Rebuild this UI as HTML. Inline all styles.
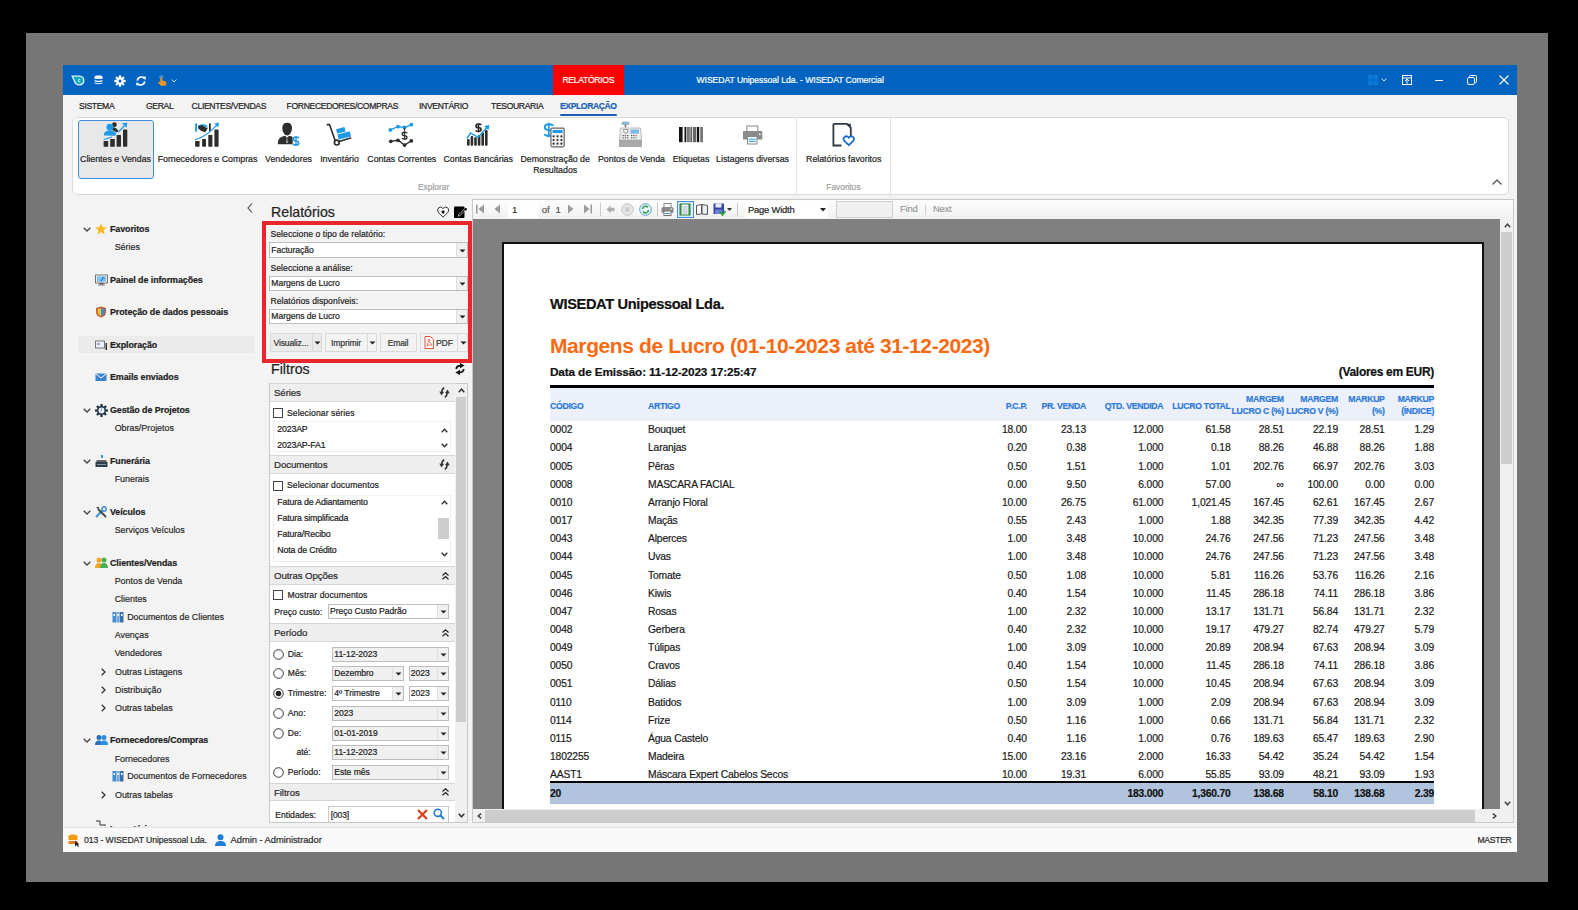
<!DOCTYPE html><html><head><meta charset="utf-8"><style>
*{margin:0;padding:0;box-sizing:border-box}
html,body{width:1578px;height:910px;overflow:hidden;background:#000;font-family:"Liberation Sans",sans-serif}
.a{position:absolute}
.t{white-space:nowrap;-webkit-text-stroke:0.2px currentColor}
</style></head><body>
<div class="a" style="left:26px;top:33px;width:1522px;height:849px;background:#767676"></div>
<div class="a" style="left:63px;top:65px;width:1454px;height:787px;background:#f3f3f3"></div>
<div class="a" style="left:63px;top:65px;width:1454px;height:30px;background:#0063bf"></div>
<svg class="a" style="left:71px;top:75px" width="14" height="11" viewBox="0 0 14 11"><path d="M1.2 1.2 L8.5 1.2 Q12.8 1.5 12.8 5.6 Q12.8 9.8 8.2 9.8 Q4.6 9.8 3.6 6.5 Z" fill="#16a9bd" stroke="#dff4f7" stroke-width="1.3"/><path d="M9.2 4.3 Q7.6 3.8 7.3 5.5 Q7.4 7.2 9.2 6.7" fill="none" stroke="#e6f7fa" stroke-width="0.9"/></svg>
<svg class="a" style="left:93.5px;top:75px" width="9" height="10" viewBox="0 0 9 10"><ellipse cx="4.5" cy="1.8" rx="4" ry="1.6" fill="#eef3f9"/><rect x="0.5" y="1.8" width="8" height="2.2" fill="#eef3f9"/><path d="M0.5 4.9 Q4.5 6.4 8.5 4.9 V6.6 Q4.5 8 0.5 6.6 Z" fill="#e2eaf4"/><path d="M0.5 7.5 Q4.5 9 8.5 7.5 V8.4 Q4.5 10 0.5 8.4 Z" fill="#e2eaf4"/></svg>
<svg class="a" style="left:113.5px;top:74.5px" width="12" height="12" viewBox="0 0 12 12"><g stroke="#fff" stroke-width="2.2"><line x1="6" y1="0.3" x2="6" y2="11.7"/><line x1="0.3" y1="6" x2="11.7" y2="6"/><line x1="2" y1="2" x2="10" y2="10"/><line x1="10" y1="2" x2="2" y2="10"/></g><circle cx="6" cy="6" r="3.8" fill="#fff"/><circle cx="6" cy="6" r="1.5" fill="#0063bf"/></svg>
<svg class="a" style="left:135.5px;top:75.5px" width="10" height="10" viewBox="0 0 10 10"><path d="M1.3 4.6 A3.9 3.9 0 0 1 8.3 2.6" fill="none" stroke="#fff" stroke-width="1.7"/><path d="M8.7 5.4 A3.9 3.9 0 0 1 1.7 7.4" fill="none" stroke="#fff" stroke-width="1.7"/><path d="M6.6 0.6 L9.9 0.8 L9.4 4.2 Z" fill="#fff"/><path d="M3.4 9.4 L0.1 9.2 L0.6 5.8 Z" fill="#fff"/></svg>
<svg class="a" style="left:156.5px;top:74px" width="10" height="12" viewBox="0 0 10 12"><path d="M2 3.2 Q4 0.2 6.5 3" fill="none" stroke="#9cc3ea" stroke-width="0.8"/><path d="M3.3 3.5 Q4.4 2.6 5.3 3.5 L5.3 6.6 L8.2 7.3 Q9.6 8 9.3 9.8 L8.6 11.8 L3.8 11.8 L1 8.6 Q0.6 7.4 2.2 7.7 L3.3 8.4 Z" fill="#f7941d"/></svg>
<svg class="a" style="left:170.5px;top:78.5px" width="6" height="4" viewBox="0 0 6 4"><path d="M0.5 0.5 L3 3 L5.5 0.5" fill="none" stroke="#cfe0f5" stroke-width="1"/></svg>
<div class="a" style="left:553px;top:65px;width:71px;height:30px;background:#fe0000"></div>
<div class="a t " style="left:488.29999999999995px;width:200px;text-align:center;top:74.5px;font-size:8.6px;line-height:11px;color:#fff;letter-spacing:-0.3px;">RELATÓRIOS</div>
<div class="a t " style="left:690.2px;width:200px;text-align:center;top:75.0px;font-size:8.6px;line-height:11px;color:#fff;letter-spacing:-0.05px;">WISEDAT Unipessoal Lda. - WISEDAT Comercial</div>
<svg class="a" style="left:1368px;top:75px" width="10" height="10" viewBox="0 0 10 10"><rect x="0" y="0" width="4.5" height="4.5" fill="#0a78d7"/><rect x="5.5" y="0" width="4.5" height="4.5" fill="#0a78d7"/><rect x="0" y="5.5" width="4.5" height="4.5" fill="#0a78d7"/><rect x="5.5" y="5.5" width="4.5" height="4.5" fill="#0a78d7"/></svg>
<svg class="a" style="left:1381px;top:78px" width="6" height="4" viewBox="0 0 6 4"><path d="M0.5 0.5 L3 3 L5.5 0.5" fill="none" stroke="#dce8f5" stroke-width="1"/></svg>
<svg class="a" style="left:1402px;top:75px" width="10" height="10" viewBox="0 0 10 10"><rect x="0.5" y="0.5" width="9" height="9" fill="none" stroke="#fff" stroke-width="1"/><line x1="0.5" y1="3" x2="9.5" y2="3" stroke="#fff"/><path d="M5 8.5 L5 4.5 M3 6 L5 4 L7 6" stroke="#fff" fill="none"/></svg>
<div class="a" style="left:1435px;top:80px;width:8px;height:1px;background:#fff"></div>
<svg class="a" style="left:1467px;top:75px" width="10" height="10" viewBox="0 0 10 10"><rect x="0.5" y="2.5" width="7" height="7" rx="1.5" fill="none" stroke="#fff"/><path d="M2.5 2.5 V1.5 Q2.5 0.5 3.5 0.5 H8.5 Q9.5 0.5 9.5 1.5 V6.5 Q9.5 7.5 8.5 7.5 H7.5" fill="none" stroke="#fff"/></svg>
<svg class="a" style="left:1499px;top:75px" width="10" height="10" viewBox="0 0 10 10"><path d="M0.5 0.5 L9.5 9.5 M9.5 0.5 L0.5 9.5" stroke="#fff" stroke-width="1.1"/></svg>
<div class="a t" style="left:79px;top:99.5px;width:45px;font-size:8.6px;line-height:13px;color:#222;letter-spacing:-0.35px">SISTEMA</div>
<div class="a t" style="left:146px;top:99.5px;width:36px;font-size:8.6px;line-height:13px;color:#222;letter-spacing:-0.35px">GERAL</div>
<div class="a t" style="left:191.6px;top:99.5px;width:85px;font-size:8.6px;line-height:13px;color:#222;letter-spacing:-0.35px">CLIENTES/VENDAS</div>
<div class="a t" style="left:286.6px;top:99.5px;width:122px;font-size:8.6px;line-height:13px;color:#222;letter-spacing:-0.35px">FORNECEDORES/COMPRAS</div>
<div class="a t" style="left:419px;top:99.5px;width:60.5px;font-size:8.6px;line-height:13px;color:#222;letter-spacing:-0.35px">INVENTÁRIO</div>
<div class="a t" style="left:491px;top:99.5px;width:61.5px;font-size:8.6px;line-height:13px;color:#222;letter-spacing:-0.35px">TESOURARIA</div>
<div class="a t" style="left:560px;top:99.5px;font-size:8.6px;line-height:13px;color:#1a5fb4;font-weight:bold;letter-spacing:-0.4px">EXPLORAÇÃO</div>
<div class="a" style="left:560px;top:114px;width:57px;height:2px;background:#1a5fb4;border-radius:1px"></div>
<div class="a" style="left:72px;top:117px;width:1437px;height:78px;background:#fff;border:1px solid #dcdcdc;border-radius:6px"></div>
<div class="a" style="left:78px;top:120px;width:76px;height:59px;background:#e8e8e8;border:1px solid #3d8ede;border-radius:3px"></div>
<div class="a" style="left:796px;top:118px;width:1px;height:76px;background:#e3e3e3"></div>
<div class="a" style="left:890px;top:118px;width:1px;height:76px;background:#e3e3e3"></div>
<div class="a t " style="left:15.5px;width:200px;text-align:center;top:153.8px;font-size:8.8px;line-height:11px;color:#222;">Clientes e Vendas</div>
<div class="a t " style="left:107.5px;width:200px;text-align:center;top:153.8px;font-size:8.8px;line-height:11px;color:#222;">Fornecedores e Compras</div>
<div class="a t " style="left:188.5px;width:200px;text-align:center;top:153.8px;font-size:8.8px;line-height:11px;color:#222;">Vendedores</div>
<div class="a t " style="left:239.5px;width:200px;text-align:center;top:153.8px;font-size:8.8px;line-height:11px;color:#222;">Inventário</div>
<div class="a t " style="left:301.8px;width:200px;text-align:center;top:153.8px;font-size:8.8px;line-height:11px;color:#222;">Contas Correntes</div>
<div class="a t " style="left:378.2px;width:200px;text-align:center;top:153.8px;font-size:8.8px;line-height:11px;color:#222;">Contas Bancárias</div>
<div class="a t " style="left:455.20000000000005px;width:200px;text-align:center;top:153.8px;font-size:8.8px;line-height:11px;color:#222;">Demonstração de</div>
<div class="a t " style="left:531.5px;width:200px;text-align:center;top:153.8px;font-size:8.8px;line-height:11px;color:#222;">Pontos de Venda</div>
<div class="a t " style="left:591px;width:200px;text-align:center;top:153.8px;font-size:8.8px;line-height:11px;color:#222;">Etiquetas</div>
<div class="a t " style="left:652.5px;width:200px;text-align:center;top:153.8px;font-size:8.8px;line-height:11px;color:#222;">Listagens diversas</div>
<div class="a t " style="left:743.7px;width:200px;text-align:center;top:153.8px;font-size:8.8px;line-height:11px;color:#222;">Relatórios favoritos</div>
<div class="a t " style="left:455.20000000000005px;width:200px;text-align:center;top:165.3px;font-size:8.8px;line-height:11px;color:#222;">Resultados</div>
<div class="a t " style="left:333.6px;width:200px;text-align:center;top:181.5px;font-size:8.4px;line-height:11px;color:#a0a0a0;">Explorar</div>
<div class="a t " style="left:743.5px;width:200px;text-align:center;top:181.5px;font-size:8.4px;line-height:11px;color:#a0a0a0;">Favoritos</div>
<svg class="a" style="left:1492px;top:179px" width="10" height="6" viewBox="0 0 10 6"><path d="M0.5 5.5 L5 1 L9.5 5.5" fill="none" stroke="#444" stroke-width="1.1"/></svg>
<svg class="a" style="left:103px;top:122px" width="26" height="26" viewBox="0 0 26 26"><rect x="0.6" y="19" width="4.6" height="5.70" rx="0.6" fill="#2d2d2d"/><rect x="7.2" y="17" width="4.6" height="7.70" rx="0.6" fill="#2d2d2d"/><rect x="13.6" y="12.9" width="4.4" height="11.80" rx="0.6" fill="#2d2d2d"/><rect x="20.0" y="7.5" width="4.3" height="17.20" rx="0.6" fill="#2d2d2d"/><circle cx="11.4" cy="2.7" r="2.4" fill="#2d2d2d"/><path d="M9 5 Q13 5 15.5 9 L13.5 10.5 Q11 8 8.5 8 Z" fill="#2d2d2d"/><circle cx="6.9" cy="5.2" r="3.4" fill="#1e9be6"/><path d="M0.8 13.6 Q0.6 8.6 6.9 8.6 Q12.8 8.6 13.2 12.6 L12 13.8 Z" fill="#1e9be6"/><path d="M0.8 17.6 Q5 16.2 9 15" stroke="#1e9be6" stroke-width="1.1" fill="none"/><path d="M15.5 10 L22 3" stroke="#1e9be6" stroke-width="1.2" fill="none"/><path d="M19 1.2 L24.3 0.8 L23.6 5.8 Z" fill="#1e9be6"/></svg>
<svg class="a" style="left:194px;top:122px" width="26" height="26" viewBox="0 0 26 26"><rect x="1.1" y="19" width="4.5" height="5.70" rx="0.6" fill="#2d2d2d"/><rect x="8.1" y="17" width="3.9" height="7.70" rx="0.6" fill="#2d2d2d"/><rect x="14.3" y="12.9" width="4.1" height="11.80" rx="0.6" fill="#2d2d2d"/><rect x="20.4" y="7.5" width="4.2" height="17.20" rx="0.6" fill="#2d2d2d"/><rect x="1.1" y="1.4" width="2" height="8.2" fill="#1e9be6"/><rect x="15" y="1.4" width="1.8" height="8.2" fill="#2d2d2d"/><path d="M4 3.5 Q8 1.2 12.5 3 L14 6 Q10 3.8 8 4.5 Z" fill="#1e9be6"/><path d="M4 4 L8 3.2 L13.8 6.5 L11.2 10.3 Q7.5 10 4.2 6.5 Z" fill="#2d2d2d"/><path d="M1 17.8 Q12 15 24 1.8" stroke="#1e9be6" stroke-width="1.1" fill="none"/><path d="M20.2 1.5 L25 0.6 L24.2 5.6 Z" fill="#1e9be6"/></svg>
<svg class="a" style="left:277px;top:122px" width="24" height="26" viewBox="0 0 24 26"><path d="M10.2 0.8 Q14.8 0.8 15 6 Q15 9.5 13.3 11.8 Q12 13.6 10.2 13.6 Q8.4 13.6 7 11.8 Q5.2 9.5 5.3 6 Q5.5 0.8 10.2 0.8 Z" fill="#2d2d2d"/><path d="M0.8 22.2 Q0.6 15 7 14 L13.5 14 Q15.8 14.5 15.7 16 L15.7 22.2 Z" fill="#2d2d2d"/><path d="M8.6 14 L11.6 14 L10.6 16 L11.2 20 L10.1 21 L9 20 L9.6 16 Z" fill="#fff"/><path d="M9.4 15.2 L10.8 15.2 L10.6 19.8 L10.1 20.4 L9.6 19.8 Z" fill="#2d2d2d"/><path d="M21.75 16.20 Q21.75 15.00 19.00 15.00 Q16.25 15.00 16.25 17.00 Q16.25 18.80 19.00 19.00 Q21.75 19.20 21.75 21.00 Q21.75 23.00 19.00 23.00 Q16.25 23.00 16.25 21.80" fill="none" stroke="#1e9be6" stroke-width="1.7"/><path d="M19.00 14.00 V24.00" stroke="#1e9be6" stroke-width="1.36"/></svg>
<svg class="a" style="left:326px;top:122px" width="26" height="26" viewBox="0 0 26 26"><path d="M1.3 2.6 L3.5 2.6 L9.3 19" stroke="#2d2d2d" stroke-width="1.6" fill="none" stroke-linecap="round"/><circle cx="10.8" cy="20.6" r="2.4" fill="#fff" stroke="#2d2d2d" stroke-width="1.7"/><path d="M13 19.4 L24.6 16.1" stroke="#2d2d2d" stroke-width="1.6" stroke-linecap="round"/><path d="M10 7.2 L18.4 5 L19.6 9.4 L11.2 11.6 Z" fill="#1e9be6"/><path d="M11.4 12.4 L23.8 9.2 L25 14.4 L12.8 17.6 Z" fill="#1e9be6"/></svg>
<svg class="a" style="left:388px;top:122px" width="27" height="26" viewBox="0 0 27 26"><path d="M2.3 7.9 L10 4.6 L16.6 5.5 L23.3 2.7" stroke="#1e9be6" stroke-width="1.3" fill="none"/><circle cx="2.3" cy="7.9" r="1.9" fill="#1e9be6"/><circle cx="10" cy="4.6" r="1.9" fill="#1e9be6"/><circle cx="16.6" cy="5.5" r="1.9" fill="#1e9be6"/><circle cx="23.3" cy="2.7" r="1.9" fill="#1e9be6"/><path d="M2.8 19.3 L10 18.3 L16.6 23.1 L23.3 18.8" stroke="#2d2d2d" stroke-width="1.3" fill="none"/><circle cx="2.8" cy="19.3" r="1.9" fill="#2d2d2d"/><circle cx="10" cy="18.3" r="1.9" fill="#2d2d2d"/><circle cx="16.6" cy="23.1" r="1.9" fill="#2d2d2d"/><circle cx="23.3" cy="18.8" r="1.9" fill="#2d2d2d"/><path d="M16.6 5.5 V9" stroke="#2d2d2d" stroke-width="1"/><path d="M18.97 11.29 Q18.97 10.26 16.60 10.26 Q14.24 10.26 14.24 11.98 Q14.24 13.53 16.60 13.70 Q18.97 13.87 18.97 15.42 Q18.97 17.14 16.60 17.14 Q14.24 17.14 14.24 16.11" fill="none" stroke="#2d2d2d" stroke-width="1.4"/><path d="M16.60 9.40 V18.00" stroke="#2d2d2d" stroke-width="1.12"/></svg>
<svg class="a" style="left:466px;top:122px" width="25" height="26" viewBox="0 0 25 26"><path d="M14.97 3.18 Q14.97 2.10 12.50 2.10 Q10.03 2.10 10.03 3.90 Q10.03 5.52 12.50 5.70 Q14.97 5.88 14.97 7.50 Q14.97 9.30 12.50 9.30 Q10.03 9.30 10.03 8.22" fill="none" stroke="#2d2d2d" stroke-width="1.8"/><path d="M12.50 1.20 V10.20" stroke="#2d2d2d" stroke-width="1.44"/><rect x="1" y="17" width="2.6" height="6.70" rx="1" fill="#2d2d2d"/><rect x="4.6" y="14" width="2.6" height="9.70" rx="1" fill="#2d2d2d"/><rect x="8.2" y="15.3" width="2.6" height="8.40" rx="1" fill="#2d2d2d"/><rect x="11.8" y="13" width="2.6" height="10.70" rx="1" fill="#2d2d2d"/><rect x="15.4" y="10.5" width="2.6" height="13.20" rx="1" fill="#2d2d2d"/><rect x="19" y="8" width="2.6" height="15.70" rx="1" fill="#2d2d2d"/><path d="M1 16.5 L4.6 11 L12 15.3 L21 5.5" stroke="#1e9be6" stroke-width="1.4" fill="none"/><path d="M18 4 L23.3 3 L22.6 8.2 Z" fill="#1e9be6"/></svg>
<svg class="a" style="left:544px;top:122px" width="22" height="26" viewBox="0 0 22 26"><path d="M8.79 3.99 Q8.79 2.25 4.80 2.25 Q0.81 2.25 0.81 5.15 Q0.81 7.76 4.80 8.05 Q8.79 8.34 8.79 10.95 Q8.79 13.85 4.80 13.85 Q0.81 13.85 0.81 12.11" fill="none" stroke="#1e9be6" stroke-width="2"/><path d="M4.80 0.80 V15.30" stroke="#1e9be6" stroke-width="1.60"/><rect x="6.9" y="6.2" width="13.3" height="18.6" rx="1.2" fill="#f2f2f2" stroke="#666" stroke-width="1.2"/><rect x="8.6" y="8" width="10" height="3" fill="#1e9be6"/><circle cx="9.60" cy="14.30" r="1.1" fill="#2d2d2d"/><circle cx="13.50" cy="14.30" r="1.1" fill="#2d2d2d"/><circle cx="17.40" cy="14.30" r="1.1" fill="#2d2d2d"/><circle cx="9.60" cy="18.00" r="1.1" fill="#2d2d2d"/><circle cx="13.50" cy="18.00" r="1.1" fill="#2d2d2d"/><circle cx="17.40" cy="18.00" r="1.1" fill="#2d2d2d"/><circle cx="9.60" cy="21.70" r="1.1" fill="#2d2d2d"/><circle cx="13.50" cy="21.70" r="1.1" fill="#2d2d2d"/><circle cx="17.40" cy="21.70" r="1.1" fill="#2d2d2d"/></svg>
<svg class="a" style="left:619px;top:121px" width="25" height="27" viewBox="0 0 25 27"><rect x="3" y="1" width="7" height="2.5" rx="0.5" fill="#8fc0e8" stroke="#888" stroke-width="0.5"/><rect x="5.7" y="3.5" width="1.6" height="3" fill="#777"/><path d="M1.5 7 L21.5 7 L22.5 19 L0.5 19 Z" fill="#eeeeee" stroke="#aaa" stroke-width="0.8"/><path d="M4.5 8.5 L9 8.5 L8.3 12 L5.2 12 Z" fill="#fff" stroke="#777" stroke-width="0.7"/><rect x="11.5" y="8.5" width="8.5" height="4.2" fill="#7cbbe6"/><rect x="3.50" y="14.00" width="1.3" height="1.1" fill="#555"/><rect x="5.80" y="14.00" width="1.3" height="1.1" fill="#555"/><rect x="8.10" y="14.00" width="1.3" height="1.1" fill="#555"/><rect x="3.50" y="16.20" width="1.3" height="1.1" fill="#555"/><rect x="5.80" y="16.20" width="1.3" height="1.1" fill="#555"/><rect x="8.10" y="16.20" width="1.3" height="1.1" fill="#555"/><rect x="12.00" y="14.00" width="1.3" height="1.1" fill="#555"/><rect x="14.30" y="14.00" width="1.3" height="1.1" fill="#555"/><rect x="16.60" y="14.00" width="1.3" height="1.1" fill="#e55"/><rect x="12.00" y="16.20" width="1.3" height="1.1" fill="#555"/><rect x="14.30" y="16.20" width="1.3" height="1.1" fill="#555"/><rect x="16.60" y="16.20" width="1.3" height="1.1" fill="#3b5"/><path d="M0 19 L23 19 L23 25.6 Q23 26 22.5 26 L0.5 26 Q0 26 0 25.5 Z" fill="#a8a8a8"/></svg>
<svg class="a" style="left:678px;top:126px" width="26" height="18" viewBox="0 0 26 18"><rect x="1" y="1" width="3.6" height="15.2" fill="#111"/><rect x="6.5" y="1" width="1.8" height="15.2" fill="#111"/><rect x="9" y="1" width="2.8" height="15.2" fill="#777"/><rect x="12.5" y="1" width="1.2" height="15.2" fill="#222"/><rect x="14.8" y="1" width="3.4" height="15.2" fill="#666"/><rect x="18.9" y="1" width="2.3" height="15.2" fill="#111"/><rect x="22.2" y="1" width="2.8" height="15.2" fill="#777"/></svg>
<svg class="a" style="left:742px;top:125px" width="21" height="21" viewBox="0 0 21 21"><rect x="4.8" y="1" width="11" height="6" fill="#fff" stroke="#888" stroke-width="1"/><path d="M1.5 6 L19.5 6 Q20.3 6 20.3 7 L20.3 14.5 L1 14.5 L1 7 Q1 6 1.5 6 Z" fill="#8a8a8a"/><rect x="17" y="8.5" width="1.5" height="1.5" fill="#fff"/><rect x="5.5" y="11.5" width="9.5" height="7.5" fill="#fff" stroke="#888" stroke-width="1"/><rect x="6.8" y="13.6" width="7" height="1" fill="#1e9be6"/><rect x="6.8" y="15.8" width="7" height="1" fill="#1e9be6"/></svg>
<svg class="a" style="left:831px;top:122px" width="25" height="26" viewBox="0 0 25 26"><path d="M2.4 1.8 L15.8 1.8 L19.8 5.6 L19.8 14 M10.5 23.5 L2.4 23.5 L2.4 1.8" fill="none" stroke="#2f3a45" stroke-width="1.8"/><path d="M15.8 1.8 L19.8 1.8 L19.8 5.6 Z" fill="#2f3a45"/><path d="M17.8 23.2 L13.4 18.9 Q11.6 16.6 13.6 14.9 Q15.8 13.4 17.8 15.6 Q19.8 13.4 22 14.9 Q24 16.6 22.2 18.9 Z" fill="#fff" stroke="#1f6fc8" stroke-width="1.8"/></svg>
<svg class="a" style="left:247px;top:203px" width="6" height="10" viewBox="0 0 6 10"><path d="M5 0.5 L1 5 L5 9.5" fill="none" stroke="#444" stroke-width="1.1"/></svg>
<div class="a" style="left:78px;top:336px;width:176px;height:17px;background:#ebebeb"></div>
<svg class="a" style="left:83px;top:226.6px" width="8" height="5" viewBox="0 0 8 5"><path d="M0.7 0.7 L4 4 L7.3 0.7" fill="none" stroke="#444" stroke-width="1.3"/></svg>
<svg class="a" style="left:95px;top:222.6px" width="12" height="12" viewBox="0 0 12 12"><path d="M6 0.3 L7.6 4.2 L11.8 4.5 L8.6 7.2 L9.6 11.4 L6 9.1 L2.4 11.4 L3.4 7.2 L0.2 4.5 L4.4 4.2 Z" fill="#f9b81b"/></svg>
<div class="a t " style="left:110px;top:222.6px;font-size:8.9px;line-height:12px;color:#222;font-weight:bold;letter-spacing:-0.07px;">Favoritos</div>
<div class="a t " style="left:114.7px;top:241.0px;font-size:8.9px;line-height:12px;color:#2a2a2a;letter-spacing:0px;">Séries</div>
<svg class="a" style="left:95px;top:273.6px" width="13" height="12" viewBox="0 0 13 12"><rect x="0.5" y="1" width="12" height="8" fill="#f4f8fc" stroke="#666" stroke-width="0.9"/><rect x="1.8" y="2.3" width="9.4" height="5.4" fill="#7cc0ee"/><path d="M6 7.6 L8 3.5 L9.5 4.5" stroke="#1f5fa0" stroke-width="0.9" fill="none"/><rect x="4.5" y="9" width="4" height="1.5" fill="#555"/><rect x="3" y="10.5" width="7" height="1" fill="#777"/></svg>
<div class="a t " style="left:110px;top:273.6px;font-size:8.9px;line-height:12px;color:#222;font-weight:bold;letter-spacing:-0.07px;">Painel de informações</div>
<svg class="a" style="left:95px;top:306px" width="12" height="12" viewBox="0 0 12 12"><path d="M6 0.5 L11 2 L11 6 Q11 10 6 11.5 Q1 10 1 6 L1 2 Z" fill="#c3572c"/><path d="M6 2 L9.5 3 L9.5 6 L6 6 Z" fill="#3a8fd8"/><path d="M2.5 6 L6 6 L6 10 Q2.5 9 2.5 6Z" fill="#f4c430"/><path d="M6 2 L2.5 3 L2.5 6 L6 6 Z" fill="#f4c430"/><path d="M6 6 L9.5 6 Q9.5 9 6 10Z" fill="#3a8fd8"/></svg>
<div class="a t " style="left:110px;top:306.0px;font-size:8.9px;line-height:12px;color:#222;font-weight:bold;letter-spacing:-0.07px;">Proteção de dados pessoais</div>
<svg class="a" style="left:95px;top:338.5px" width="13" height="12" viewBox="0 0 13 12"><rect x="0.5" y="2" width="9" height="7" fill="#eef" stroke="#777" stroke-width="1"/><rect x="10.5" y="4" width="1.5" height="7" fill="#333"/><rect x="2" y="4" width="3" height="2" fill="#8ab"/></svg>
<div class="a t " style="left:110px;top:338.5px;font-size:8.9px;line-height:12px;color:#222;font-weight:bold;letter-spacing:-0.07px;">Exploração</div>
<svg class="a" style="left:95px;top:371px" width="12" height="12" viewBox="0 0 12 12"><rect x="0.5" y="2.5" width="11" height="7.5" fill="#3b82d0"/><path d="M0.5 2.5 L6 7 L11.5 2.5" fill="none" stroke="#fff" stroke-width="1"/></svg>
<div class="a t " style="left:110px;top:371.0px;font-size:8.9px;line-height:12px;color:#222;font-weight:bold;letter-spacing:-0.07px;">Emails enviados</div>
<svg class="a" style="left:83px;top:408px" width="8" height="5" viewBox="0 0 8 5"><path d="M0.7 0.7 L4 4 L7.3 0.7" fill="none" stroke="#444" stroke-width="1.3"/></svg>
<svg class="a" style="left:95px;top:404px" width="13" height="13" viewBox="0 0 13 13"><rect x="5.4" y="0" width="2.2" height="3" fill="#1f3346" transform="rotate(0 6.5 6.5)"/><rect x="5.4" y="0" width="2.2" height="3" fill="#1f3346" transform="rotate(45 6.5 6.5)"/><rect x="5.4" y="0" width="2.2" height="3" fill="#1f3346" transform="rotate(90 6.5 6.5)"/><rect x="5.4" y="0" width="2.2" height="3" fill="#1f3346" transform="rotate(135 6.5 6.5)"/><rect x="5.4" y="0" width="2.2" height="3" fill="#1f3346" transform="rotate(180 6.5 6.5)"/><rect x="5.4" y="0" width="2.2" height="3" fill="#1f3346" transform="rotate(225 6.5 6.5)"/><rect x="5.4" y="0" width="2.2" height="3" fill="#1f3346" transform="rotate(270 6.5 6.5)"/><rect x="5.4" y="0" width="2.2" height="3" fill="#1f3346" transform="rotate(315 6.5 6.5)"/><circle cx="6.5" cy="6.5" r="4.6" fill="#1f3346"/><circle cx="6.5" cy="6.5" r="3" fill="#f3f3f3"/><path d="M6.5 4.5 L6.5 6.5 L5.5 7.5" stroke="#3a8fd8" stroke-width="0.9" fill="none"/></svg>
<div class="a t " style="left:110px;top:404.0px;font-size:8.9px;line-height:12px;color:#222;font-weight:bold;letter-spacing:-0.07px;">Gestão de Projetos</div>
<div class="a t " style="left:114.7px;top:422.0px;font-size:8.9px;line-height:12px;color:#2a2a2a;letter-spacing:0px;">Obras/Projetos</div>
<svg class="a" style="left:83px;top:458.5px" width="8" height="5" viewBox="0 0 8 5"><path d="M0.7 0.7 L4 4 L7.3 0.7" fill="none" stroke="#444" stroke-width="1.3"/></svg>
<svg class="a" style="left:95px;top:454.5px" width="13" height="12" viewBox="0 0 13 12"><rect x="6" y="0" width="2" height="3" fill="#3a8fd8"/><path d="M2 5 L11 5 L12 7 L1 7 Z" fill="#666"/><rect x="0.5" y="7" width="12" height="5" fill="#2d3e50"/><rect x="2" y="9" width="9" height="0.8" fill="#aaa"/></svg>
<div class="a t " style="left:110px;top:454.5px;font-size:8.9px;line-height:12px;color:#222;font-weight:bold;letter-spacing:-0.07px;">Funerária</div>
<div class="a t " style="left:114.7px;top:472.5px;font-size:8.9px;line-height:12px;color:#2a2a2a;letter-spacing:0px;">Funerais</div>
<svg class="a" style="left:83px;top:509.5px" width="8" height="5" viewBox="0 0 8 5"><path d="M0.7 0.7 L4 4 L7.3 0.7" fill="none" stroke="#444" stroke-width="1.3"/></svg>
<svg class="a" style="left:95px;top:505.5px" width="12" height="12" viewBox="0 0 12 12"><path d="M1 11 L8 4" stroke="#3a8fd8" stroke-width="2"/><path d="M11 11 L3 3" stroke="#444" stroke-width="1.8"/><path d="M1 1 L4 1 L4 4 Z" fill="#444"/><circle cx="9" cy="3" r="2.2" fill="none" stroke="#3a8fd8" stroke-width="1.4"/></svg>
<div class="a t " style="left:110px;top:505.5px;font-size:8.9px;line-height:12px;color:#222;font-weight:bold;letter-spacing:-0.07px;">Veículos</div>
<div class="a t " style="left:114.7px;top:523.5px;font-size:8.9px;line-height:12px;color:#2a2a2a;letter-spacing:0px;">Serviços Veículos</div>
<svg class="a" style="left:83px;top:560.5px" width="8" height="5" viewBox="0 0 8 5"><path d="M0.7 0.7 L4 4 L7.3 0.7" fill="none" stroke="#444" stroke-width="1.3"/></svg>
<svg class="a" style="left:95px;top:556.5px" width="13" height="12" viewBox="0 0 13 12"><circle cx="4" cy="3" r="2.5" fill="#f4a523"/><path d="M0 11 Q0 6 4 6 Q7 6 7 11Z" fill="#f4a523"/><circle cx="9" cy="3" r="2.5" fill="#4caf50"/><path d="M5 11 Q5 6 9 6 Q13 6 13 11Z" fill="#4caf50"/></svg>
<div class="a t " style="left:110px;top:556.5px;font-size:8.9px;line-height:12px;color:#222;font-weight:bold;letter-spacing:-0.07px;">Clientes/Vendas</div>
<div class="a t " style="left:114.7px;top:574.7px;font-size:8.9px;line-height:12px;color:#2a2a2a;letter-spacing:0px;">Pontos de Venda</div>
<div class="a t " style="left:114.7px;top:592.5px;font-size:8.9px;line-height:12px;color:#2a2a2a;letter-spacing:0px;">Clientes</div>
<svg class="a" style="left:112px;top:611px" width="12" height="12" viewBox="0 0 12 12"><rect x="0.5" y="1" width="3.5" height="10.5" fill="#3a8fd8"/><rect x="4.3" y="1" width="3.5" height="10.5" fill="#7aa7d8"/><rect x="8" y="1" width="3.5" height="10.5" fill="#3a6fa8"/><rect x="1.5" y="3" width="1.5" height="2" fill="#fff"/><rect x="5.3" y="3" width="1.5" height="2" fill="#fff"/><rect x="9" y="3" width="1.5" height="2" fill="#fff"/></svg>
<div class="a t " style="left:127.2px;top:611.0px;font-size:8.9px;line-height:12px;color:#2a2a2a;letter-spacing:0px;">Documentos de Clientes</div>
<div class="a t " style="left:114.7px;top:629.4px;font-size:8.9px;line-height:12px;color:#2a2a2a;letter-spacing:0px;">Avenças</div>
<div class="a t " style="left:114.7px;top:647.2px;font-size:8.9px;line-height:12px;color:#2a2a2a;letter-spacing:0px;">Vendedores</div>
<svg class="a" style="left:101px;top:667.7px" width="5" height="8" viewBox="0 0 5 8"><path d="M0.7 0.7 L4 4 L0.7 7.3" fill="none" stroke="#333" stroke-width="1.3"/></svg>
<div class="a t " style="left:115px;top:665.7px;font-size:8.9px;line-height:12px;color:#2a2a2a;letter-spacing:0px;">Outras Listagens</div>
<svg class="a" style="left:101px;top:685.5px" width="5" height="8" viewBox="0 0 5 8"><path d="M0.7 0.7 L4 4 L0.7 7.3" fill="none" stroke="#333" stroke-width="1.3"/></svg>
<div class="a t " style="left:115px;top:683.5px;font-size:8.9px;line-height:12px;color:#2a2a2a;letter-spacing:0px;">Distribuição</div>
<svg class="a" style="left:101px;top:703.7px" width="5" height="8" viewBox="0 0 5 8"><path d="M0.7 0.7 L4 4 L0.7 7.3" fill="none" stroke="#333" stroke-width="1.3"/></svg>
<div class="a t " style="left:115px;top:701.7px;font-size:8.9px;line-height:12px;color:#2a2a2a;letter-spacing:0px;">Outras tabelas</div>
<svg class="a" style="left:83px;top:738.3px" width="8" height="5" viewBox="0 0 8 5"><path d="M0.7 0.7 L4 4 L7.3 0.7" fill="none" stroke="#444" stroke-width="1.3"/></svg>
<svg class="a" style="left:95px;top:734.3px" width="13" height="12" viewBox="0 0 13 12"><circle cx="4" cy="3.5" r="2.5" fill="#2a6fb8"/><path d="M0 11 Q0 6.5 4 6.5 Q7 6.5 7 11Z" fill="#2a6fb8"/><circle cx="9" cy="3.5" r="2.5" fill="#2a8fe0"/><path d="M5 11 Q5 6.5 9 6.5 Q13 6.5 13 11Z" fill="#2a8fe0"/></svg>
<div class="a t " style="left:110px;top:734.3px;font-size:8.9px;line-height:12px;color:#222;font-weight:bold;letter-spacing:-0.07px;">Fornecedores/Compras</div>
<div class="a t " style="left:114.7px;top:752.5px;font-size:8.9px;line-height:12px;color:#2a2a2a;letter-spacing:0px;">Fornecedores</div>
<svg class="a" style="left:112px;top:770px" width="12" height="12" viewBox="0 0 12 12"><rect x="0.5" y="1" width="3.5" height="10.5" fill="#3a8fd8"/><rect x="4.3" y="1" width="3.5" height="10.5" fill="#7aa7d8"/><rect x="8" y="1" width="3.5" height="10.5" fill="#3a6fa8"/><rect x="1.5" y="3" width="1.5" height="2" fill="#fff"/><rect x="5.3" y="3" width="1.5" height="2" fill="#fff"/><rect x="9" y="3" width="1.5" height="2" fill="#fff"/></svg>
<div class="a t " style="left:127.2px;top:770.3px;font-size:8.9px;line-height:12px;color:#2a2a2a;letter-spacing:0px;">Documentos de Fornecedores</div>
<svg class="a" style="left:101px;top:790.8px" width="5" height="8" viewBox="0 0 5 8"><path d="M0.7 0.7 L4 4 L0.7 7.3" fill="none" stroke="#333" stroke-width="1.3"/></svg>
<div class="a t " style="left:115px;top:788.8px;font-size:8.9px;line-height:12px;color:#2a2a2a;letter-spacing:0px;">Outras tabelas</div>
<div class="a" style="left:63px;top:816px;width:192px;height:11px;overflow:hidden">
<div class="a t" style="left:47px;top:7px;font-size:8.9px;line-height:12px;font-weight:bold;color:#222">Inventário</div><svg class="a" style="left:32px;top:4px" width="12" height="10"><path d="M1 1 L5 1 L5 5 L11 5" stroke="#333" fill="none"/></svg>
</div>
<div class="a" style="left:63px;top:827px;width:1454px;height:1px;background:#e3e3e3"></div>
<div class="a" style="left:63px;top:828px;width:1454px;height:24px;background:#f9f9f9"></div>
<svg class="a" style="left:68px;top:834px" width="12" height="13" viewBox="0 0 12 13"><ellipse cx="5" cy="2.5" rx="4.5" ry="2" fill="#f39c12"/><rect x="0.5" y="3" width="9" height="3" fill="#f39c12"/><rect x="0.5" y="7" width="9" height="3" fill="#e67e22"/><path d="M7 7 L7 12.5 L8.5 11 L10 13 L11 12.5 L9.8 10.5 L11.5 10.2 Z" fill="#222"/></svg>
<div class="a t " style="left:84px;top:834.0px;font-size:8.7px;line-height:12px;color:#2a2a2a;letter-spacing:-0.1px;">013 - WISEDAT Unipessoal Lda.</div>
<svg class="a" style="left:215px;top:834px" width="11" height="12" viewBox="0 0 11 12"><circle cx="5.5" cy="3.2" r="3" fill="#1f7fd6"/><path d="M0 12 Q0 7 5.5 7 Q11 7 11 12Z" fill="#1f7fd6"/></svg>
<div class="a t " style="left:230.6px;top:834.0px;font-size:9.4px;line-height:12px;color:#2a2a2a;letter-spacing:-0.05px;">Admin - Administrador</div>
<div class="a t " style="right:66.5px;top:834.0px;font-size:8.6px;line-height:12px;color:#2a2a2a;letter-spacing:-0.3px;">MASTER</div>
<div class="a t " style="left:271px;top:204.0px;font-size:14.2px;line-height:17px;color:#222;">Relatórios</div>
<svg class="a" style="left:437px;top:206px" width="13" height="12" viewBox="0 0 13 12"><path d="M6.1 11.2 L1.3 6.3 Q-0.3 3.9 1.5 1.8 Q3.9 -0.1 6.1 2.5 Q8.3 -0.1 10.7 1.8 Q12.5 3.9 10.9 6.3 Z" fill="#fff" stroke="#333" stroke-width="1"/><path d="M6.1 4 L8 6 L6.1 8 L4.2 6 Z" fill="#111"/></svg>
<svg class="a" style="left:454px;top:206px" width="13" height="13" viewBox="0 0 13 13"><path d="M1 0.5 L9.5 0.5 Q10.5 0.5 10.5 1.5 L10.5 11 Q10.5 12 9.5 12 L1 12 Q0 12 0 11 L0 1.5 Q0 0.5 1 0.5 Z" fill="#000"/><path d="M4.3 10.3 L4.8 8.3 L10.8 2.6 L12 3.8 L6 9.5 Z" fill="none" stroke="#ddd" stroke-width="0.7"/><circle cx="11.6" cy="3.2" r="1.3" fill="#000"/></svg>
<div class="a" style="left:262px;top:221px;width:210px;height:142px;border:4px solid #e8262b"></div>
<div class="a t " style="left:270.5px;top:228.5px;font-size:8.6px;line-height:11px;color:#222;letter-spacing:0.05px;">Seleccione o tipo de relatório:</div>
<div class="a" style="left:269px;top:242px;width:199px;height:16px;background:#fff;border:1px solid #bdbdbd"></div>
<div class="a" style="left:456px;top:243px;width:11px;height:14px;background:#f0f0f0;border-left:1px solid #e0e0e0"></div>
<svg class="a" style="left:458.5px;top:248.5px" width="7" height="4" viewBox="0 0 7 4"><path d="M0.5 0.5 L6.5 0.5 L3.5 3.5 Z" fill="#222"/></svg>
<div class="a t " style="left:271.3px;top:244.5px;font-size:8.6px;line-height:11px;color:#222;letter-spacing:-0.05px;">Facturação</div>
<div class="a t " style="left:270.5px;top:262.5px;font-size:8.6px;line-height:11px;color:#222;letter-spacing:0.05px;">Seleccione a análise:</div>
<div class="a" style="left:269px;top:276px;width:199px;height:15px;background:#fff;border:1px solid #bdbdbd"></div>
<div class="a" style="left:456px;top:277px;width:11px;height:13px;background:#f0f0f0;border-left:1px solid #e0e0e0"></div>
<svg class="a" style="left:458.5px;top:282.0px" width="7" height="4" viewBox="0 0 7 4"><path d="M0.5 0.5 L6.5 0.5 L3.5 3.5 Z" fill="#222"/></svg>
<div class="a t " style="left:271.3px;top:278.0px;font-size:8.6px;line-height:11px;color:#222;letter-spacing:-0.05px;">Margens de Lucro</div>
<div class="a t " style="left:270.5px;top:295.5px;font-size:8.6px;line-height:11px;color:#222;letter-spacing:0.05px;">Relatórios disponíveis:</div>
<div class="a" style="left:269px;top:309px;width:199px;height:15px;background:#fff;border:1px solid #bdbdbd"></div>
<div class="a" style="left:456px;top:310px;width:11px;height:13px;background:#f0f0f0;border-left:1px solid #e0e0e0"></div>
<svg class="a" style="left:458.5px;top:315.0px" width="7" height="4" viewBox="0 0 7 4"><path d="M0.5 0.5 L6.5 0.5 L3.5 3.5 Z" fill="#222"/></svg>
<div class="a t " style="left:271.3px;top:311.0px;font-size:8.6px;line-height:11px;color:#222;letter-spacing:-0.05px;">Margens de Lucro</div>
<div class="a" style="left:269.5px;top:333px;width:43.0px;height:19px;background:#ebebeb;border:1px solid #dadada"></div>
<div class="a" style="left:312.5px;top:333px;width:9.5px;height:19px;background:#ebebeb;border:1px solid #dadada;border-left:none"></div>
<svg class="a" style="left:314.25px;top:341px" width="7" height="4" viewBox="0 0 7 4"><path d="M0.5 0.5 L6.5 0.5 L3.5 3.5 Z" fill="#222"/></svg>
<div class="a t " style="left:191.0px;width:200px;text-align:center;top:337.7px;font-size:8.6px;line-height:11px;color:#333;letter-spacing:-0.15px;">Visualiz...</div>
<div class="a" style="left:324.5px;top:333px;width:43.0px;height:19px;background:#f3f3f3;border:1px solid #dadada"></div>
<div class="a" style="left:367.5px;top:333px;width:9.5px;height:19px;background:#f3f3f3;border:1px solid #dadada;border-left:none"></div>
<svg class="a" style="left:369.25px;top:341px" width="7" height="4" viewBox="0 0 7 4"><path d="M0.5 0.5 L6.5 0.5 L3.5 3.5 Z" fill="#222"/></svg>
<div class="a t " style="left:246.0px;width:200px;text-align:center;top:337.7px;font-size:8.6px;line-height:11px;color:#333;letter-spacing:-0.15px;">Imprimir</div>
<div class="a" style="left:379.5px;top:333px;width:37.0px;height:19px;background:#f3f3f3;border:1px solid #dadada"></div>
<div class="a t " style="left:298.0px;width:200px;text-align:center;top:337.7px;font-size:8.6px;line-height:11px;color:#333;letter-spacing:-0.15px;">Email</div>
<div class="a" style="left:419.5px;top:333px;width:38.5px;height:19px;background:#f3f3f3;border:1px solid #dadada"></div>
<div class="a" style="left:458px;top:333px;width:10px;height:19px;background:#f3f3f3;border:1px solid #dadada;border-left:none"></div>
<svg class="a" style="left:460.0px;top:341px" width="7" height="4" viewBox="0 0 7 4"><path d="M0.5 0.5 L6.5 0.5 L3.5 3.5 Z" fill="#222"/></svg>
<div class="a t " style="left:436px;top:337.7px;font-size:8.6px;line-height:11px;color:#333;letter-spacing:-0.15px;">PDF</div>
<svg class="a" style="left:424px;top:336px" width="10" height="13" viewBox="0 0 10 13"><path d="M1 0.5 L6.5 0.5 L9.5 3.5 L9.5 12.5 L1 12.5 Z" fill="#fff" stroke="#e0553a" stroke-width="1"/><path d="M3 10 Q5 4 5 3 Q5 6 8 9 Q5 8.5 3 10Z" fill="none" stroke="#e0553a" stroke-width="0.8"/></svg>
<div class="a t " style="left:271px;top:361.0px;font-size:14.2px;line-height:17px;color:#222;">Filtros</div>
<svg class="a" style="left:455px;top:363px" width="10" height="12" viewBox="0 0 10 12"><path d="M1.3 6 Q1.6 2.6 5.6 2.6" fill="none" stroke="#111" stroke-width="1.8"/><path d="M5 0 L9.6 2.6 L5 5.2 Z" fill="#111"/><path d="M8.7 6 Q8.4 9.4 4.4 9.4" fill="none" stroke="#111" stroke-width="1.8"/><path d="M5 6.8 L0.4 9.4 L5 12 Z" fill="#111"/></svg>
<div class="a" style="left:269px;top:383px;width:199px;height:440px;background:#fff;border:1px solid #c8c8c8"></div>
<div class="a" style="left:455px;top:384px;width:12px;height:438px;background:#f0f0f0"></div>
<div class="a" style="left:456px;top:397px;width:10px;height:325px;background:#cdcdcd"></div>
<svg class="a" style="left:458px;top:388px" width="7" height="5" viewBox="0 0 7 5"><path d="M0.7 4.3 L3.5 1.2 L6.3 4.3" fill="none" stroke="#333" stroke-width="1.5"/></svg>
<svg class="a" style="left:458px;top:813px" width="7" height="5" viewBox="0 0 7 5"><path d="M0.7 0.7 L3.5 3.8 L6.3 0.7" fill="none" stroke="#333" stroke-width="1.5"/></svg>
<div class="a" style="left:270px;top:383px;width:185px;height:19px;background:#eeeeee;border-top:1px solid #d6d6d6;border-bottom:1px solid #d6d6d6"></div>
<div class="a t " style="left:274px;top:387.0px;font-size:9.7px;line-height:12px;color:#2a2a2a;letter-spacing:-0.1px;">Séries</div>
<svg class="a" style="left:439px;top:387.0px" width="11" height="11" viewBox="0 0 11 11"><path d="M5.2 0.8 Q3 1.8 2.8 5.5" fill="none" stroke="#333" stroke-width="1.6"/><path d="M0.3 4.6 L5 5 L2.4 8.4 Z" fill="#333"/><path d="M5.8 10.2 Q8 9.2 8.2 5.5" fill="none" stroke="#333" stroke-width="1.6"/><path d="M10.7 6.4 L6 6 L8.6 2.6 Z" fill="#333"/></svg>
<div class="a" style="left:273px;top:408.4px;width:10px;height:10.0px;background:#fff;border:1px solid #444"></div>
<div class="a t " style="left:287px;top:407.7px;font-size:8.6px;line-height:11px;color:#222;letter-spacing:0.1px;">Selecionar séries</div>
<div class="a" style="left:273px;top:421px;width:178px;height:31px;background:#fff;border:1px solid #f0f0f0"></div>
<div class="a t " style="left:277.2px;top:424.1px;font-size:8.8px;line-height:11px;color:#1a1a1a;letter-spacing:-0.15px;">2023AP</div>
<div class="a t " style="left:277.2px;top:440.3px;font-size:8.8px;line-height:11px;color:#1a1a1a;letter-spacing:-0.15px;">2023AP-FA1</div>
<svg class="a" style="left:440.5px;top:427.5px" width="7" height="5" viewBox="0 0 7 5"><path d="M0.7 4.3 L3.5 1.2 L6.3 4.3" fill="none" stroke="#333" stroke-width="1.4"/></svg>
<svg class="a" style="left:440.5px;top:443px" width="7" height="5" viewBox="0 0 7 5"><path d="M0.7 0.7 L3.5 3.8 L6.3 0.7" fill="none" stroke="#333" stroke-width="1.4"/></svg>
<div class="a" style="left:270px;top:455px;width:185px;height:19px;background:#eeeeee;border-top:1px solid #d6d6d6;border-bottom:1px solid #d6d6d6"></div>
<div class="a t " style="left:274px;top:459.0px;font-size:9.7px;line-height:12px;color:#2a2a2a;letter-spacing:-0.1px;">Documentos</div>
<svg class="a" style="left:439px;top:459.0px" width="11" height="11" viewBox="0 0 11 11"><path d="M5.2 0.8 Q3 1.8 2.8 5.5" fill="none" stroke="#333" stroke-width="1.6"/><path d="M0.3 4.6 L5 5 L2.4 8.4 Z" fill="#333"/><path d="M5.8 10.2 Q8 9.2 8.2 5.5" fill="none" stroke="#333" stroke-width="1.6"/><path d="M10.7 6.4 L6 6 L8.6 2.6 Z" fill="#333"/></svg>
<div class="a" style="left:273px;top:480.9px;width:10px;height:10.0px;background:#fff;border:1px solid #444"></div>
<div class="a t " style="left:287px;top:480.2px;font-size:8.6px;line-height:11px;color:#222;letter-spacing:0.1px;">Selecionar documentos</div>
<div class="a" style="left:273px;top:495px;width:178px;height:67px;background:#fff;border:1px solid #f0f0f0"></div>
<div class="a t " style="left:277.2px;top:497.1px;font-size:8.8px;line-height:11px;color:#1a1a1a;letter-spacing:-0.15px;">Fatura de Adiantamento</div>
<div class="a t " style="left:277.2px;top:513.1px;font-size:8.8px;line-height:11px;color:#1a1a1a;letter-spacing:-0.15px;">Fatura simplificada</div>
<div class="a t " style="left:277.2px;top:529.1px;font-size:8.8px;line-height:11px;color:#1a1a1a;letter-spacing:-0.15px;">Fatura/Recibo</div>
<div class="a t " style="left:277.2px;top:545.1px;font-size:8.8px;line-height:11px;color:#1a1a1a;letter-spacing:-0.15px;">Nota de Crédito</div>
<div class="a" style="left:438px;top:518px;width:11px;height:21px;background:#cdcdcd"></div>
<svg class="a" style="left:440.5px;top:500px" width="7" height="5" viewBox="0 0 7 5"><path d="M0.7 4.3 L3.5 1.2 L6.3 4.3" fill="none" stroke="#333" stroke-width="1.4"/></svg>
<svg class="a" style="left:440.5px;top:552px" width="7" height="5" viewBox="0 0 7 5"><path d="M0.7 0.7 L3.5 3.8 L6.3 0.7" fill="none" stroke="#333" stroke-width="1.4"/></svg>
<div class="a" style="left:270px;top:566px;width:185px;height:19px;background:#eeeeee;border-top:1px solid #d6d6d6;border-bottom:1px solid #d6d6d6"></div>
<div class="a t " style="left:274px;top:570.0px;font-size:9.7px;line-height:12px;color:#2a2a2a;letter-spacing:-0.1px;">Outras Opções</div>
<svg class="a" style="left:441.5px;top:571.5px" width="7" height="8" viewBox="0 0 7 8"><path d="M0.5 3.5 L3.5 0.8 L6.5 3.5 M0.5 7.2 L3.5 4.5 L6.5 7.2" fill="none" stroke="#222" stroke-width="1.2"/></svg>
<div class="a" style="left:273.4px;top:590.2px;width:10.0px;height:10.0px;background:#fff;border:1px solid #444"></div>
<div class="a t " style="left:287.4px;top:589.5px;font-size:8.6px;line-height:11px;color:#222;letter-spacing:0.1px;">Mostrar documentos</div>
<div class="a t " style="left:274.3px;top:606.5px;font-size:8.6px;line-height:11px;color:#222;letter-spacing:0.02px;">Preço custo:</div>
<div class="a" style="left:327.7px;top:604px;width:121.30000000000001px;height:15px;background:#fff;border:1px solid #bdbdbd"></div>
<div class="a" style="left:437px;top:605px;width:11px;height:13px;background:#f0f0f0;border-left:1px solid #e0e0e0"></div>
<svg class="a" style="left:439.5px;top:610.0px" width="7" height="4" viewBox="0 0 7 4"><path d="M0.5 0.5 L6.5 0.5 L3.5 3.5 Z" fill="#222"/></svg>
<div class="a t " style="left:330.0px;top:606.0px;font-size:8.6px;line-height:11px;color:#222;letter-spacing:-0.05px;">Preço Custo Padrão</div>
<div class="a" style="left:270px;top:623px;width:185px;height:19px;background:#eeeeee;border-top:1px solid #d6d6d6;border-bottom:1px solid #d6d6d6"></div>
<div class="a t " style="left:274px;top:627.0px;font-size:9.7px;line-height:12px;color:#2a2a2a;letter-spacing:-0.1px;">Período</div>
<svg class="a" style="left:441.5px;top:628.5px" width="7" height="8" viewBox="0 0 7 8"><path d="M0.5 3.5 L3.5 0.8 L6.5 3.5 M0.5 7.2 L3.5 4.5 L6.5 7.2" fill="none" stroke="#222" stroke-width="1.2"/></svg>
<svg class="a" style="left:273px;top:648.9px" width="11" height="11" viewBox="0 0 11 11"><circle cx="5.5" cy="5.5" r="4.8" fill="#fff" stroke="#333" stroke-width="1"/></svg>
<div class="a t " style="left:287.7px;top:648.9px;font-size:8.6px;line-height:11px;color:#222;letter-spacing:0.05px;">Dia:</div>
<div class="a" style="left:332px;top:647px;width:117px;height:15px;background:#f0f0f0;border:1px solid #bdbdbd"></div>
<div class="a" style="left:437px;top:648px;width:11px;height:13px;background:#f0f0f0;border-left:1px solid #e0e0e0"></div>
<svg class="a" style="left:439.5px;top:653.0px" width="7" height="4" viewBox="0 0 7 4"><path d="M0.5 0.5 L6.5 0.5 L3.5 3.5 Z" fill="#222"/></svg>
<div class="a t " style="left:334.3px;top:649.0px;font-size:8.6px;line-height:11px;color:#222;letter-spacing:-0.05px;">11-12-2023</div>
<svg class="a" style="left:273px;top:668.2px" width="11" height="11" viewBox="0 0 11 11"><circle cx="5.5" cy="5.5" r="4.8" fill="#fff" stroke="#333" stroke-width="1"/></svg>
<div class="a t " style="left:287.7px;top:668.2px;font-size:8.6px;line-height:11px;color:#222;letter-spacing:0.05px;">Mês:</div>
<div class="a" style="left:332px;top:666px;width:72px;height:15px;background:#f0f0f0;border:1px solid #bdbdbd"></div>
<div class="a" style="left:392px;top:667px;width:11px;height:13px;background:#f0f0f0;border-left:1px solid #e0e0e0"></div>
<svg class="a" style="left:394.5px;top:672.0px" width="7" height="4" viewBox="0 0 7 4"><path d="M0.5 0.5 L6.5 0.5 L3.5 3.5 Z" fill="#222"/></svg>
<div class="a t " style="left:334.3px;top:668.0px;font-size:8.6px;line-height:11px;color:#222;letter-spacing:-0.05px;">Dezembro</div>
<div class="a" style="left:408.5px;top:666px;width:40.5px;height:15px;background:#f0f0f0;border:1px solid #bdbdbd"></div>
<div class="a" style="left:437px;top:667px;width:11px;height:13px;background:#f0f0f0;border-left:1px solid #e0e0e0"></div>
<svg class="a" style="left:439.5px;top:672.0px" width="7" height="4" viewBox="0 0 7 4"><path d="M0.5 0.5 L6.5 0.5 L3.5 3.5 Z" fill="#222"/></svg>
<div class="a t " style="left:410.8px;top:668.0px;font-size:8.6px;line-height:11px;color:#222;letter-spacing:-0.05px;">2023</div>
<svg class="a" style="left:273px;top:688.1px" width="11" height="11" viewBox="0 0 11 11"><circle cx="5.5" cy="5.5" r="4.8" fill="#fff" stroke="#333" stroke-width="1"/><circle cx="5.5" cy="5.5" r="2.8" fill="#222"/></svg>
<div class="a t " style="left:287.7px;top:688.1px;font-size:8.6px;line-height:11px;color:#222;letter-spacing:0.05px;">Trimestre:</div>
<div class="a" style="left:332px;top:686px;width:72px;height:15px;background:#fff;border:1px solid #bdbdbd"></div>
<div class="a" style="left:392px;top:687px;width:11px;height:13px;background:#f0f0f0;border-left:1px solid #e0e0e0"></div>
<svg class="a" style="left:394.5px;top:692.0px" width="7" height="4" viewBox="0 0 7 4"><path d="M0.5 0.5 L6.5 0.5 L3.5 3.5 Z" fill="#222"/></svg>
<div class="a t " style="left:334.3px;top:688.0px;font-size:8.6px;line-height:11px;color:#222;letter-spacing:-0.05px;">4º Trimestre</div>
<div class="a" style="left:408.5px;top:686px;width:40.5px;height:15px;background:#fff;border:1px solid #bdbdbd"></div>
<div class="a" style="left:437px;top:687px;width:11px;height:13px;background:#f0f0f0;border-left:1px solid #e0e0e0"></div>
<svg class="a" style="left:439.5px;top:692.0px" width="7" height="4" viewBox="0 0 7 4"><path d="M0.5 0.5 L6.5 0.5 L3.5 3.5 Z" fill="#222"/></svg>
<div class="a t " style="left:410.8px;top:688.0px;font-size:8.6px;line-height:11px;color:#222;letter-spacing:-0.05px;">2023</div>
<svg class="a" style="left:273px;top:708.0px" width="11" height="11" viewBox="0 0 11 11"><circle cx="5.5" cy="5.5" r="4.8" fill="#fff" stroke="#333" stroke-width="1"/></svg>
<div class="a t " style="left:287.7px;top:708.0px;font-size:8.6px;line-height:11px;color:#222;letter-spacing:0.05px;">Ano:</div>
<div class="a" style="left:332px;top:706px;width:117px;height:15px;background:#f0f0f0;border:1px solid #bdbdbd"></div>
<div class="a" style="left:437px;top:707px;width:11px;height:13px;background:#f0f0f0;border-left:1px solid #e0e0e0"></div>
<svg class="a" style="left:439.5px;top:712.0px" width="7" height="4" viewBox="0 0 7 4"><path d="M0.5 0.5 L6.5 0.5 L3.5 3.5 Z" fill="#222"/></svg>
<div class="a t " style="left:334.3px;top:708.0px;font-size:8.6px;line-height:11px;color:#222;letter-spacing:-0.05px;">2023</div>
<svg class="a" style="left:273px;top:727.9px" width="11" height="11" viewBox="0 0 11 11"><circle cx="5.5" cy="5.5" r="4.8" fill="#fff" stroke="#333" stroke-width="1"/></svg>
<div class="a t " style="left:287.7px;top:727.9px;font-size:8.6px;line-height:11px;color:#222;letter-spacing:0.05px;">De:</div>
<div class="a" style="left:332px;top:726px;width:117px;height:15px;background:#f0f0f0;border:1px solid #bdbdbd"></div>
<div class="a" style="left:437px;top:727px;width:11px;height:13px;background:#f0f0f0;border-left:1px solid #e0e0e0"></div>
<svg class="a" style="left:439.5px;top:732.0px" width="7" height="4" viewBox="0 0 7 4"><path d="M0.5 0.5 L6.5 0.5 L3.5 3.5 Z" fill="#222"/></svg>
<div class="a t " style="left:334.3px;top:728.0px;font-size:8.6px;line-height:11px;color:#222;letter-spacing:-0.05px;">01-01-2019</div>
<div class="a t " style="left:296.6px;top:746.9px;font-size:8.6px;line-height:11px;color:#222;letter-spacing:-0.15px;">até:</div>
<div class="a" style="left:332px;top:745px;width:117px;height:15px;background:#f0f0f0;border:1px solid #bdbdbd"></div>
<div class="a" style="left:437px;top:746px;width:11px;height:13px;background:#f0f0f0;border-left:1px solid #e0e0e0"></div>
<svg class="a" style="left:439.5px;top:751.0px" width="7" height="4" viewBox="0 0 7 4"><path d="M0.5 0.5 L6.5 0.5 L3.5 3.5 Z" fill="#222"/></svg>
<div class="a t " style="left:334.3px;top:747.0px;font-size:8.6px;line-height:11px;color:#222;letter-spacing:-0.05px;">11-12-2023</div>
<svg class="a" style="left:273px;top:766.5px" width="11" height="11" viewBox="0 0 11 11"><circle cx="5.5" cy="5.5" r="4.8" fill="#fff" stroke="#333" stroke-width="1"/></svg>
<div class="a t " style="left:287.7px;top:766.5px;font-size:8.6px;line-height:11px;color:#222;letter-spacing:0.05px;">Período:</div>
<div class="a" style="left:332px;top:765px;width:117px;height:15px;background:#f0f0f0;border:1px solid #bdbdbd"></div>
<div class="a" style="left:437px;top:766px;width:11px;height:13px;background:#f0f0f0;border-left:1px solid #e0e0e0"></div>
<svg class="a" style="left:439.5px;top:771.0px" width="7" height="4" viewBox="0 0 7 4"><path d="M0.5 0.5 L6.5 0.5 L3.5 3.5 Z" fill="#222"/></svg>
<div class="a t " style="left:334.3px;top:767.0px;font-size:8.6px;line-height:11px;color:#222;letter-spacing:-0.05px;">Este mês</div>
<div class="a" style="left:270px;top:783px;width:185px;height:18px;background:#eeeeee;border-top:1px solid #d6d6d6;border-bottom:1px solid #d6d6d6"></div>
<div class="a t " style="left:274px;top:786.5px;font-size:9.7px;line-height:12px;color:#2a2a2a;letter-spacing:-0.1px;">Filtros</div>
<svg class="a" style="left:441.5px;top:788.0px" width="7" height="8" viewBox="0 0 7 8"><path d="M0.5 3.5 L3.5 0.8 L6.5 3.5 M0.5 7.2 L3.5 4.5 L6.5 7.2" fill="none" stroke="#222" stroke-width="1.2"/></svg>
<div class="a t " style="left:275.2px;top:809.8px;font-size:8.6px;line-height:11px;color:#222;letter-spacing:0.02px;">Entidades:</div>
<div class="a" style="left:327.7px;top:806px;width:121.30000000000001px;height:16px;background:#fff;border:1px solid #c8c8c8;border-bottom:none"></div>
<div class="a t " style="left:330.7px;top:809.5px;font-size:8.6px;line-height:11px;color:#222;letter-spacing:-0.15px;">[003]</div>
<svg class="a" style="left:417px;top:809px" width="11" height="11" viewBox="0 0 11 11"><path d="M1 1 L10 10 M10 1 L1 10" stroke="#e03c1f" stroke-width="2.2"/></svg>
<svg class="a" style="left:433px;top:808px" width="12" height="12" viewBox="0 0 12 12"><circle cx="4.8" cy="4.8" r="3.6" fill="none" stroke="#1e7ad6" stroke-width="1.6"/><path d="M7.5 7.5 L11 11" stroke="#1e7ad6" stroke-width="2"/></svg>
<div class="a" style="left:472px;top:199px;width:1042px;height:624px;background:#f0f0f0;border:1px solid #c9c9c9"></div>
<div class="a" style="left:473px;top:200px;width:1040px;height:19px;background:linear-gradient(#fdfdfd,#f1f1f1)"></div>
<div class="a" style="left:473px;top:219px;width:1027px;height:590px;background:#808080"></div>
<div class="a" style="left:1500px;top:219px;width:13px;height:590px;background:#f0f0f0"></div>
<div class="a" style="left:1501px;top:232px;width:11px;height:232px;background:#cdcdcd"></div>
<svg class="a" style="left:1503.5px;top:223px" width="7" height="5" viewBox="0 0 7 5"><path d="M0.8 4.2 L3.5 1.2 L6.2 4.2" fill="none" stroke="#444" stroke-width="1.5"/></svg>
<svg class="a" style="left:1503.5px;top:800.5px" width="7" height="5" viewBox="0 0 7 5"><path d="M0.8 0.8 L3.5 3.8 L6.2 0.8" fill="none" stroke="#444" stroke-width="1.5"/></svg>
<div class="a" style="left:473px;top:809px;width:1040px;height:13px;background:#f0f0f0"></div>
<div class="a" style="left:485px;top:810px;width:990px;height:12px;background:#cdcdcd"></div>
<svg class="a" style="left:477px;top:813px" width="5" height="6" viewBox="0 0 5 6"><path d="M4.2 0.6 L1.2 3 L4.2 5.4" fill="none" stroke="#444" stroke-width="1.5"/></svg>
<svg class="a" style="left:1491.5px;top:813px" width="5" height="6" viewBox="0 0 5 6"><path d="M0.8 0.6 L3.8 3 L0.8 5.4" fill="none" stroke="#444" stroke-width="1.5"/></svg>
<svg class="a" style="left:475px;top:203px" width="10" height="12" viewBox="0 0 10 12"><rect x="1" y="1.5" width="1.5" height="9" fill="#9a9a9a"/><path d="M9 1.5 L3.5 6 L9 10.5Z" fill="#9a9a9a"/></svg>
<svg class="a" style="left:494px;top:203px" width="7" height="12" viewBox="0 0 7 12"><path d="M6 1.5 L0.5 6 L6 10.5Z" fill="#9a9a9a"/></svg>
<div class="a" style="left:508px;top:201px;width:30px;height:17px;background:#fff"></div>
<div class="a t " style="left:512px;top:203.5px;font-size:9.5px;line-height:12px;color:#333;">1</div>
<div class="a t " style="left:541.8px;top:203.5px;font-size:9.5px;line-height:12px;color:#555;">of</div>
<div class="a t " style="left:555.6px;top:203.5px;font-size:9.5px;line-height:12px;color:#555;">1</div>
<svg class="a" style="left:567px;top:203px" width="7" height="12" viewBox="0 0 7 12"><path d="M1 1.5 L6.5 6 L1 10.5Z" fill="#9a9a9a"/></svg>
<svg class="a" style="left:583px;top:203px" width="10" height="12" viewBox="0 0 10 12"><path d="M1 1.5 L6.5 6 L1 10.5Z" fill="#9a9a9a"/><rect x="7.5" y="1.5" width="1.5" height="9" fill="#9a9a9a"/></svg>
<div class="a" style="left:600px;top:203px;width:1px;height:13px;background:#c8c8c8"></div>
<svg class="a" style="left:606px;top:205px" width="9" height="9" viewBox="0 0 9 9"><path d="M0.5 4.5 L4.5 0.5 L4.5 2.8 L8.5 2.8 L8.5 6.2 L4.5 6.2 L4.5 8.5Z" fill="#b0b0b0"/></svg>
<svg class="a" style="left:621px;top:203px" width="13" height="13" viewBox="0 0 13 13"><circle cx="6.5" cy="6.5" r="5.8" fill="#e6e6e6" stroke="#c4c4c4"/><path d="M4.3 4.3 L8.7 8.7 M8.7 4.3 L4.3 8.7" stroke="#c0c0c0" stroke-width="1.2"/></svg>
<svg class="a" style="left:639px;top:203px" width="13" height="13" viewBox="0 0 13 13"><circle cx="6.5" cy="6.5" r="5.8" fill="#eaf4fb" stroke="#5aa0d8"/><path d="M3.5 6 A3 3 0 0 1 9 4.5" stroke="#3aa04a" stroke-width="1.6" fill="none"/><path d="M9.5 7 A3 3 0 0 1 4 8.5" stroke="#3aa04a" stroke-width="1.6" fill="none"/></svg>
<div class="a" style="left:657px;top:203px;width:1px;height:13px;background:#c8c8c8"></div>
<svg class="a" style="left:661px;top:203px" width="13" height="13" viewBox="0 0 13 13"><rect x="3" y="0.5" width="7" height="4" fill="#fafafa" stroke="#888"/><rect x="0.5" y="4" width="12" height="6" rx="1.5" fill="#8a8a8a"/><rect x="3" y="8" width="7" height="4.5" fill="#fff" stroke="#777"/><rect x="4" y="10" width="5" height="1" fill="#4a90d9"/><rect x="9.5" y="5.5" width="1.5" height="1.2" fill="#dfe"/></svg>
<div class="a" style="left:676.5px;top:201px;width:17.5px;height:17px;background:#dcecfa;border:1px solid #3d8ede"></div>
<svg class="a" style="left:679px;top:203px" width="12" height="13" viewBox="0 0 12 13"><rect x="0.5" y="0.5" width="11" height="12" fill="#2d7a3a"/><rect x="1.5" y="1.2" width="9" height="10.6" fill="#3b9a4a"/><rect x="2.6" y="1.5" width="6.8" height="10" fill="#f4f6fa"/><path d="M3.5 4 H8.5 M3.5 6 H8.5 M3.5 8 H8.5 M3.5 10 H8.5" stroke="#8a9ab0" stroke-width="0.7"/></svg>
<svg class="a" style="left:696px;top:204px" width="12" height="11" viewBox="0 0 12 11"><path d="M0.5 1.5 L5.5 0.5 L5.5 10 L0.5 10.5Z" fill="#fff" stroke="#555"/><path d="M6 0.5 L11.5 1.5 L11.5 10.5 L6 10Z" fill="#e8f1fb" stroke="#555"/></svg>
<svg class="a" style="left:713px;top:203px" width="13" height="14" viewBox="0 0 13 14"><rect x="0.5" y="0.5" width="10.5" height="10.5" fill="#3546a8"/><rect x="2.5" y="0.5" width="6" height="4" fill="#e8ecf8"/><rect x="2" y="6.5" width="7.5" height="4.5" fill="#6c7fd8"/><path d="M7 8.5 L9.5 12 L12.5 8" stroke="#2ea043" stroke-width="1.8" fill="none"/></svg>
<svg class="a" style="left:727px;top:208px" width="5" height="3" viewBox="0 0 5 3"><path d="M0 0 L5 0 L2.5 3Z" fill="#333"/></svg>
<div class="a" style="left:737px;top:203px;width:1px;height:13px;background:#c8c8c8"></div>
<div class="a" style="left:745px;top:201px;width:83px;height:17px;background:#fff"></div>
<div class="a t " style="left:748px;top:203.5px;font-size:9.4px;line-height:12px;color:#222;letter-spacing:-0.2px;">Page Width</div>
<svg class="a" style="left:820px;top:208px" width="6" height="3.5" viewBox="0 0 6 3.5"><path d="M0 0 L6 0 L3 3.5Z" fill="#222"/></svg>
<div class="a" style="left:836px;top:201px;width:57px;height:17px;background:#f0f0f0;border:1px solid #cfcfcf"></div>
<div class="a t " style="left:900px;top:202.8px;font-size:9.4px;line-height:12px;color:#9a9a9a;letter-spacing:-0.2px;">Find</div>
<div class="a" style="left:925px;top:204px;width:1px;height:11px;background:#d0d0d0"></div>
<div class="a t " style="left:933px;top:202.8px;font-size:9.4px;line-height:12px;color:#9a9a9a;letter-spacing:-0.2px;">Next</div>
<div class="a" style="left:502px;top:242px;width:982px;height:567px;background:#fff;border-left:2px solid #111;border-top:2px solid #111;border-right:2px solid #111;overflow:hidden"></div>
<div class="a t " style="left:550px;top:294.5px;font-size:14.6px;line-height:18px;color:#111;font-weight:bold;letter-spacing:-0.35px;">WISEDAT Unipessoal Lda.</div>
<div class="a t " style="left:550px;top:334.0px;font-size:21px;line-height:24px;color:#fa6a12;font-weight:bold;letter-spacing:-0.4px;-webkit-text-stroke:0;">Margens de Lucro (01-10-2023 até 31-12-2023)</div>
<div class="a t " style="left:550px;top:365.0px;font-size:11.8px;line-height:14px;color:#111;font-weight:bold;letter-spacing:-0.15px;">Data de Emissão: 11-12-2023 17:25:47</div>
<div class="a t " style="right:144px;top:365.0px;font-size:12px;line-height:14px;color:#111;font-weight:bold;letter-spacing:-0.3px;">(Valores em EUR)</div>
<div class="a" style="left:550px;top:385px;width:884px;height:3px;background:#000"></div>
<div class="a" style="left:550px;top:388px;width:884px;height:33px;background:#ebf0fa"></div>
<div class="a t " style="left:550px;top:400.8px;font-size:8.7px;line-height:10px;color:#2f7ad8;font-weight:bold;letter-spacing:-0.3px;">CÓDIGO</div>
<div class="a t " style="left:648px;top:400.8px;font-size:8.7px;line-height:10px;color:#2f7ad8;font-weight:bold;letter-spacing:-0.3px;">ARTIGO</div>
<div class="a t " style="right:551.0999999999999px;top:400.8px;font-size:8.7px;line-height:10px;color:#2f7ad8;font-weight:bold;letter-spacing:-0.3px;">P.C.P.</div>
<div class="a t " style="right:492px;top:400.8px;font-size:8.7px;line-height:10px;color:#2f7ad8;font-weight:bold;letter-spacing:-0.3px;">PR. VENDA</div>
<div class="a t " style="right:414.70000000000005px;top:400.8px;font-size:8.7px;line-height:10px;color:#2f7ad8;font-weight:bold;letter-spacing:-0.3px;">QTD. VENDIDA</div>
<div class="a t " style="right:347.5px;top:400.8px;font-size:8.7px;line-height:10px;color:#2f7ad8;font-weight:bold;letter-spacing:-0.3px;">LUCRO TOTAL</div>
<div class="a t " style="right:294.20000000000005px;top:393.8px;font-size:8.7px;line-height:10px;color:#2f7ad8;font-weight:bold;letter-spacing:-0.3px;">MARGEM</div>
<div class="a t " style="right:294.20000000000005px;top:405.7px;font-size:8.7px;line-height:10px;color:#2f7ad8;font-weight:bold;letter-spacing:-0.3px;">LUCRO C (%)</div>
<div class="a t " style="right:240px;top:393.8px;font-size:8.7px;line-height:10px;color:#2f7ad8;font-weight:bold;letter-spacing:-0.3px;">MARGEM</div>
<div class="a t " style="right:240px;top:405.7px;font-size:8.7px;line-height:10px;color:#2f7ad8;font-weight:bold;letter-spacing:-0.3px;">LUCRO V (%)</div>
<div class="a t " style="right:193.4000000000001px;top:393.8px;font-size:8.7px;line-height:10px;color:#2f7ad8;font-weight:bold;letter-spacing:-0.3px;">MARKUP</div>
<div class="a t " style="right:193.4000000000001px;top:405.7px;font-size:8.7px;line-height:10px;color:#2f7ad8;font-weight:bold;letter-spacing:-0.3px;">(%)</div>
<div class="a t " style="right:144px;top:393.8px;font-size:8.7px;line-height:10px;color:#2f7ad8;font-weight:bold;letter-spacing:-0.3px;">MARKUP</div>
<div class="a t " style="right:144px;top:405.7px;font-size:8.7px;line-height:10px;color:#2f7ad8;font-weight:bold;letter-spacing:-0.3px;">(ÍNDICE)</div>
<div class="a t " style="left:550px;top:423.3px;font-size:10.3px;line-height:13px;color:#1a1a1a;letter-spacing:-0.15px;">0002</div>
<div class="a t " style="left:648px;top:423.3px;font-size:10.3px;line-height:13px;color:#1a1a1a;letter-spacing:-0.15px;">Bouquet</div>
<div class="a t " style="right:551.0999999999999px;top:423.3px;font-size:10.3px;line-height:13px;color:#1a1a1a;letter-spacing:-0.15px;">18.00</div>
<div class="a t " style="right:492px;top:423.3px;font-size:10.3px;line-height:13px;color:#1a1a1a;letter-spacing:-0.15px;">23.13</div>
<div class="a t " style="right:414.70000000000005px;top:423.3px;font-size:10.3px;line-height:13px;color:#1a1a1a;letter-spacing:-0.15px;">12.000</div>
<div class="a t " style="right:347.5px;top:423.3px;font-size:10.3px;line-height:13px;color:#1a1a1a;letter-spacing:-0.15px;">61.58</div>
<div class="a t " style="right:294.20000000000005px;top:423.3px;font-size:10.3px;line-height:13px;color:#1a1a1a;letter-spacing:-0.15px;">28.51</div>
<div class="a t " style="right:240px;top:423.3px;font-size:10.3px;line-height:13px;color:#1a1a1a;letter-spacing:-0.15px;">22.19</div>
<div class="a t " style="right:193.4000000000001px;top:423.3px;font-size:10.3px;line-height:13px;color:#1a1a1a;letter-spacing:-0.15px;">28.51</div>
<div class="a t " style="right:144px;top:423.3px;font-size:10.3px;line-height:13px;color:#1a1a1a;letter-spacing:-0.15px;">1.29</div>
<div class="a t " style="left:550px;top:441.4px;font-size:10.3px;line-height:13px;color:#1a1a1a;letter-spacing:-0.15px;">0004</div>
<div class="a t " style="left:648px;top:441.4px;font-size:10.3px;line-height:13px;color:#1a1a1a;letter-spacing:-0.15px;">Laranjas</div>
<div class="a t " style="right:551.0999999999999px;top:441.4px;font-size:10.3px;line-height:13px;color:#1a1a1a;letter-spacing:-0.15px;">0.20</div>
<div class="a t " style="right:492px;top:441.4px;font-size:10.3px;line-height:13px;color:#1a1a1a;letter-spacing:-0.15px;">0.38</div>
<div class="a t " style="right:414.70000000000005px;top:441.4px;font-size:10.3px;line-height:13px;color:#1a1a1a;letter-spacing:-0.15px;">1.000</div>
<div class="a t " style="right:347.5px;top:441.4px;font-size:10.3px;line-height:13px;color:#1a1a1a;letter-spacing:-0.15px;">0.18</div>
<div class="a t " style="right:294.20000000000005px;top:441.4px;font-size:10.3px;line-height:13px;color:#1a1a1a;letter-spacing:-0.15px;">88.26</div>
<div class="a t " style="right:240px;top:441.4px;font-size:10.3px;line-height:13px;color:#1a1a1a;letter-spacing:-0.15px;">46.88</div>
<div class="a t " style="right:193.4000000000001px;top:441.4px;font-size:10.3px;line-height:13px;color:#1a1a1a;letter-spacing:-0.15px;">88.26</div>
<div class="a t " style="right:144px;top:441.4px;font-size:10.3px;line-height:13px;color:#1a1a1a;letter-spacing:-0.15px;">1.88</div>
<div class="a t " style="left:550px;top:459.6px;font-size:10.3px;line-height:13px;color:#1a1a1a;letter-spacing:-0.15px;">0005</div>
<div class="a t " style="left:648px;top:459.6px;font-size:10.3px;line-height:13px;color:#1a1a1a;letter-spacing:-0.15px;">Pêras</div>
<div class="a t " style="right:551.0999999999999px;top:459.6px;font-size:10.3px;line-height:13px;color:#1a1a1a;letter-spacing:-0.15px;">0.50</div>
<div class="a t " style="right:492px;top:459.6px;font-size:10.3px;line-height:13px;color:#1a1a1a;letter-spacing:-0.15px;">1.51</div>
<div class="a t " style="right:414.70000000000005px;top:459.6px;font-size:10.3px;line-height:13px;color:#1a1a1a;letter-spacing:-0.15px;">1.000</div>
<div class="a t " style="right:347.5px;top:459.6px;font-size:10.3px;line-height:13px;color:#1a1a1a;letter-spacing:-0.15px;">1.01</div>
<div class="a t " style="right:294.20000000000005px;top:459.6px;font-size:10.3px;line-height:13px;color:#1a1a1a;letter-spacing:-0.15px;">202.76</div>
<div class="a t " style="right:240px;top:459.6px;font-size:10.3px;line-height:13px;color:#1a1a1a;letter-spacing:-0.15px;">66.97</div>
<div class="a t " style="right:193.4000000000001px;top:459.6px;font-size:10.3px;line-height:13px;color:#1a1a1a;letter-spacing:-0.15px;">202.76</div>
<div class="a t " style="right:144px;top:459.6px;font-size:10.3px;line-height:13px;color:#1a1a1a;letter-spacing:-0.15px;">3.03</div>
<div class="a t " style="left:550px;top:477.8px;font-size:10.3px;line-height:13px;color:#1a1a1a;letter-spacing:-0.15px;">0008</div>
<div class="a t " style="left:648px;top:477.8px;font-size:10.3px;line-height:13px;color:#1a1a1a;letter-spacing:-0.15px;">MASCARA FACIAL</div>
<div class="a t " style="right:551.0999999999999px;top:477.8px;font-size:10.3px;line-height:13px;color:#1a1a1a;letter-spacing:-0.15px;">0.00</div>
<div class="a t " style="right:492px;top:477.8px;font-size:10.3px;line-height:13px;color:#1a1a1a;letter-spacing:-0.15px;">9.50</div>
<div class="a t " style="right:414.70000000000005px;top:477.8px;font-size:10.3px;line-height:13px;color:#1a1a1a;letter-spacing:-0.15px;">6.000</div>
<div class="a t " style="right:347.5px;top:477.8px;font-size:10.3px;line-height:13px;color:#1a1a1a;letter-spacing:-0.15px;">57.00</div>
<div class="a t " style="right:294.20000000000005px;top:477.8px;font-size:10.3px;line-height:13px;color:#1a1a1a;letter-spacing:-0.15px;">∞</div>
<div class="a t " style="right:240px;top:477.8px;font-size:10.3px;line-height:13px;color:#1a1a1a;letter-spacing:-0.15px;">100.00</div>
<div class="a t " style="right:193.4000000000001px;top:477.8px;font-size:10.3px;line-height:13px;color:#1a1a1a;letter-spacing:-0.15px;">0.00</div>
<div class="a t " style="right:144px;top:477.8px;font-size:10.3px;line-height:13px;color:#1a1a1a;letter-spacing:-0.15px;">0.00</div>
<div class="a t " style="left:550px;top:495.9px;font-size:10.3px;line-height:13px;color:#1a1a1a;letter-spacing:-0.15px;">0010</div>
<div class="a t " style="left:648px;top:495.9px;font-size:10.3px;line-height:13px;color:#1a1a1a;letter-spacing:-0.15px;">Arranjo Floral</div>
<div class="a t " style="right:551.0999999999999px;top:495.9px;font-size:10.3px;line-height:13px;color:#1a1a1a;letter-spacing:-0.15px;">10.00</div>
<div class="a t " style="right:492px;top:495.9px;font-size:10.3px;line-height:13px;color:#1a1a1a;letter-spacing:-0.15px;">26.75</div>
<div class="a t " style="right:414.70000000000005px;top:495.9px;font-size:10.3px;line-height:13px;color:#1a1a1a;letter-spacing:-0.15px;">61.000</div>
<div class="a t " style="right:347.5px;top:495.9px;font-size:10.3px;line-height:13px;color:#1a1a1a;letter-spacing:-0.15px;">1,021.45</div>
<div class="a t " style="right:294.20000000000005px;top:495.9px;font-size:10.3px;line-height:13px;color:#1a1a1a;letter-spacing:-0.15px;">167.45</div>
<div class="a t " style="right:240px;top:495.9px;font-size:10.3px;line-height:13px;color:#1a1a1a;letter-spacing:-0.15px;">62.61</div>
<div class="a t " style="right:193.4000000000001px;top:495.9px;font-size:10.3px;line-height:13px;color:#1a1a1a;letter-spacing:-0.15px;">167.45</div>
<div class="a t " style="right:144px;top:495.9px;font-size:10.3px;line-height:13px;color:#1a1a1a;letter-spacing:-0.15px;">2.67</div>
<div class="a t " style="left:550px;top:514.0px;font-size:10.3px;line-height:13px;color:#1a1a1a;letter-spacing:-0.15px;">0017</div>
<div class="a t " style="left:648px;top:514.0px;font-size:10.3px;line-height:13px;color:#1a1a1a;letter-spacing:-0.15px;">Maçãs</div>
<div class="a t " style="right:551.0999999999999px;top:514.0px;font-size:10.3px;line-height:13px;color:#1a1a1a;letter-spacing:-0.15px;">0.55</div>
<div class="a t " style="right:492px;top:514.0px;font-size:10.3px;line-height:13px;color:#1a1a1a;letter-spacing:-0.15px;">2.43</div>
<div class="a t " style="right:414.70000000000005px;top:514.0px;font-size:10.3px;line-height:13px;color:#1a1a1a;letter-spacing:-0.15px;">1.000</div>
<div class="a t " style="right:347.5px;top:514.0px;font-size:10.3px;line-height:13px;color:#1a1a1a;letter-spacing:-0.15px;">1.88</div>
<div class="a t " style="right:294.20000000000005px;top:514.0px;font-size:10.3px;line-height:13px;color:#1a1a1a;letter-spacing:-0.15px;">342.35</div>
<div class="a t " style="right:240px;top:514.0px;font-size:10.3px;line-height:13px;color:#1a1a1a;letter-spacing:-0.15px;">77.39</div>
<div class="a t " style="right:193.4000000000001px;top:514.0px;font-size:10.3px;line-height:13px;color:#1a1a1a;letter-spacing:-0.15px;">342.35</div>
<div class="a t " style="right:144px;top:514.0px;font-size:10.3px;line-height:13px;color:#1a1a1a;letter-spacing:-0.15px;">4.42</div>
<div class="a t " style="left:550px;top:532.2px;font-size:10.3px;line-height:13px;color:#1a1a1a;letter-spacing:-0.15px;">0043</div>
<div class="a t " style="left:648px;top:532.2px;font-size:10.3px;line-height:13px;color:#1a1a1a;letter-spacing:-0.15px;">Alperces</div>
<div class="a t " style="right:551.0999999999999px;top:532.2px;font-size:10.3px;line-height:13px;color:#1a1a1a;letter-spacing:-0.15px;">1.00</div>
<div class="a t " style="right:492px;top:532.2px;font-size:10.3px;line-height:13px;color:#1a1a1a;letter-spacing:-0.15px;">3.48</div>
<div class="a t " style="right:414.70000000000005px;top:532.2px;font-size:10.3px;line-height:13px;color:#1a1a1a;letter-spacing:-0.15px;">10.000</div>
<div class="a t " style="right:347.5px;top:532.2px;font-size:10.3px;line-height:13px;color:#1a1a1a;letter-spacing:-0.15px;">24.76</div>
<div class="a t " style="right:294.20000000000005px;top:532.2px;font-size:10.3px;line-height:13px;color:#1a1a1a;letter-spacing:-0.15px;">247.56</div>
<div class="a t " style="right:240px;top:532.2px;font-size:10.3px;line-height:13px;color:#1a1a1a;letter-spacing:-0.15px;">71.23</div>
<div class="a t " style="right:193.4000000000001px;top:532.2px;font-size:10.3px;line-height:13px;color:#1a1a1a;letter-spacing:-0.15px;">247.56</div>
<div class="a t " style="right:144px;top:532.2px;font-size:10.3px;line-height:13px;color:#1a1a1a;letter-spacing:-0.15px;">3.48</div>
<div class="a t " style="left:550px;top:550.4px;font-size:10.3px;line-height:13px;color:#1a1a1a;letter-spacing:-0.15px;">0044</div>
<div class="a t " style="left:648px;top:550.4px;font-size:10.3px;line-height:13px;color:#1a1a1a;letter-spacing:-0.15px;">Uvas</div>
<div class="a t " style="right:551.0999999999999px;top:550.4px;font-size:10.3px;line-height:13px;color:#1a1a1a;letter-spacing:-0.15px;">1.00</div>
<div class="a t " style="right:492px;top:550.4px;font-size:10.3px;line-height:13px;color:#1a1a1a;letter-spacing:-0.15px;">3.48</div>
<div class="a t " style="right:414.70000000000005px;top:550.4px;font-size:10.3px;line-height:13px;color:#1a1a1a;letter-spacing:-0.15px;">10.000</div>
<div class="a t " style="right:347.5px;top:550.4px;font-size:10.3px;line-height:13px;color:#1a1a1a;letter-spacing:-0.15px;">24.76</div>
<div class="a t " style="right:294.20000000000005px;top:550.4px;font-size:10.3px;line-height:13px;color:#1a1a1a;letter-spacing:-0.15px;">247.56</div>
<div class="a t " style="right:240px;top:550.4px;font-size:10.3px;line-height:13px;color:#1a1a1a;letter-spacing:-0.15px;">71.23</div>
<div class="a t " style="right:193.4000000000001px;top:550.4px;font-size:10.3px;line-height:13px;color:#1a1a1a;letter-spacing:-0.15px;">247.56</div>
<div class="a t " style="right:144px;top:550.4px;font-size:10.3px;line-height:13px;color:#1a1a1a;letter-spacing:-0.15px;">3.48</div>
<div class="a t " style="left:550px;top:568.5px;font-size:10.3px;line-height:13px;color:#1a1a1a;letter-spacing:-0.15px;">0045</div>
<div class="a t " style="left:648px;top:568.5px;font-size:10.3px;line-height:13px;color:#1a1a1a;letter-spacing:-0.15px;">Tomate</div>
<div class="a t " style="right:551.0999999999999px;top:568.5px;font-size:10.3px;line-height:13px;color:#1a1a1a;letter-spacing:-0.15px;">0.50</div>
<div class="a t " style="right:492px;top:568.5px;font-size:10.3px;line-height:13px;color:#1a1a1a;letter-spacing:-0.15px;">1.08</div>
<div class="a t " style="right:414.70000000000005px;top:568.5px;font-size:10.3px;line-height:13px;color:#1a1a1a;letter-spacing:-0.15px;">10.000</div>
<div class="a t " style="right:347.5px;top:568.5px;font-size:10.3px;line-height:13px;color:#1a1a1a;letter-spacing:-0.15px;">5.81</div>
<div class="a t " style="right:294.20000000000005px;top:568.5px;font-size:10.3px;line-height:13px;color:#1a1a1a;letter-spacing:-0.15px;">116.26</div>
<div class="a t " style="right:240px;top:568.5px;font-size:10.3px;line-height:13px;color:#1a1a1a;letter-spacing:-0.15px;">53.76</div>
<div class="a t " style="right:193.4000000000001px;top:568.5px;font-size:10.3px;line-height:13px;color:#1a1a1a;letter-spacing:-0.15px;">116.26</div>
<div class="a t " style="right:144px;top:568.5px;font-size:10.3px;line-height:13px;color:#1a1a1a;letter-spacing:-0.15px;">2.16</div>
<div class="a t " style="left:550px;top:586.6px;font-size:10.3px;line-height:13px;color:#1a1a1a;letter-spacing:-0.15px;">0046</div>
<div class="a t " style="left:648px;top:586.6px;font-size:10.3px;line-height:13px;color:#1a1a1a;letter-spacing:-0.15px;">Kiwis</div>
<div class="a t " style="right:551.0999999999999px;top:586.6px;font-size:10.3px;line-height:13px;color:#1a1a1a;letter-spacing:-0.15px;">0.40</div>
<div class="a t " style="right:492px;top:586.6px;font-size:10.3px;line-height:13px;color:#1a1a1a;letter-spacing:-0.15px;">1.54</div>
<div class="a t " style="right:414.70000000000005px;top:586.6px;font-size:10.3px;line-height:13px;color:#1a1a1a;letter-spacing:-0.15px;">10.000</div>
<div class="a t " style="right:347.5px;top:586.6px;font-size:10.3px;line-height:13px;color:#1a1a1a;letter-spacing:-0.15px;">11.45</div>
<div class="a t " style="right:294.20000000000005px;top:586.6px;font-size:10.3px;line-height:13px;color:#1a1a1a;letter-spacing:-0.15px;">286.18</div>
<div class="a t " style="right:240px;top:586.6px;font-size:10.3px;line-height:13px;color:#1a1a1a;letter-spacing:-0.15px;">74.11</div>
<div class="a t " style="right:193.4000000000001px;top:586.6px;font-size:10.3px;line-height:13px;color:#1a1a1a;letter-spacing:-0.15px;">286.18</div>
<div class="a t " style="right:144px;top:586.6px;font-size:10.3px;line-height:13px;color:#1a1a1a;letter-spacing:-0.15px;">3.86</div>
<div class="a t " style="left:550px;top:604.8px;font-size:10.3px;line-height:13px;color:#1a1a1a;letter-spacing:-0.15px;">0047</div>
<div class="a t " style="left:648px;top:604.8px;font-size:10.3px;line-height:13px;color:#1a1a1a;letter-spacing:-0.15px;">Rosas</div>
<div class="a t " style="right:551.0999999999999px;top:604.8px;font-size:10.3px;line-height:13px;color:#1a1a1a;letter-spacing:-0.15px;">1.00</div>
<div class="a t " style="right:492px;top:604.8px;font-size:10.3px;line-height:13px;color:#1a1a1a;letter-spacing:-0.15px;">2.32</div>
<div class="a t " style="right:414.70000000000005px;top:604.8px;font-size:10.3px;line-height:13px;color:#1a1a1a;letter-spacing:-0.15px;">10.000</div>
<div class="a t " style="right:347.5px;top:604.8px;font-size:10.3px;line-height:13px;color:#1a1a1a;letter-spacing:-0.15px;">13.17</div>
<div class="a t " style="right:294.20000000000005px;top:604.8px;font-size:10.3px;line-height:13px;color:#1a1a1a;letter-spacing:-0.15px;">131.71</div>
<div class="a t " style="right:240px;top:604.8px;font-size:10.3px;line-height:13px;color:#1a1a1a;letter-spacing:-0.15px;">56.84</div>
<div class="a t " style="right:193.4000000000001px;top:604.8px;font-size:10.3px;line-height:13px;color:#1a1a1a;letter-spacing:-0.15px;">131.71</div>
<div class="a t " style="right:144px;top:604.8px;font-size:10.3px;line-height:13px;color:#1a1a1a;letter-spacing:-0.15px;">2.32</div>
<div class="a t " style="left:550px;top:623.0px;font-size:10.3px;line-height:13px;color:#1a1a1a;letter-spacing:-0.15px;">0048</div>
<div class="a t " style="left:648px;top:623.0px;font-size:10.3px;line-height:13px;color:#1a1a1a;letter-spacing:-0.15px;">Gerbera</div>
<div class="a t " style="right:551.0999999999999px;top:623.0px;font-size:10.3px;line-height:13px;color:#1a1a1a;letter-spacing:-0.15px;">0.40</div>
<div class="a t " style="right:492px;top:623.0px;font-size:10.3px;line-height:13px;color:#1a1a1a;letter-spacing:-0.15px;">2.32</div>
<div class="a t " style="right:414.70000000000005px;top:623.0px;font-size:10.3px;line-height:13px;color:#1a1a1a;letter-spacing:-0.15px;">10.000</div>
<div class="a t " style="right:347.5px;top:623.0px;font-size:10.3px;line-height:13px;color:#1a1a1a;letter-spacing:-0.15px;">19.17</div>
<div class="a t " style="right:294.20000000000005px;top:623.0px;font-size:10.3px;line-height:13px;color:#1a1a1a;letter-spacing:-0.15px;">479.27</div>
<div class="a t " style="right:240px;top:623.0px;font-size:10.3px;line-height:13px;color:#1a1a1a;letter-spacing:-0.15px;">82.74</div>
<div class="a t " style="right:193.4000000000001px;top:623.0px;font-size:10.3px;line-height:13px;color:#1a1a1a;letter-spacing:-0.15px;">479.27</div>
<div class="a t " style="right:144px;top:623.0px;font-size:10.3px;line-height:13px;color:#1a1a1a;letter-spacing:-0.15px;">5.79</div>
<div class="a t " style="left:550px;top:641.1px;font-size:10.3px;line-height:13px;color:#1a1a1a;letter-spacing:-0.15px;">0049</div>
<div class="a t " style="left:648px;top:641.1px;font-size:10.3px;line-height:13px;color:#1a1a1a;letter-spacing:-0.15px;">Túlipas</div>
<div class="a t " style="right:551.0999999999999px;top:641.1px;font-size:10.3px;line-height:13px;color:#1a1a1a;letter-spacing:-0.15px;">1.00</div>
<div class="a t " style="right:492px;top:641.1px;font-size:10.3px;line-height:13px;color:#1a1a1a;letter-spacing:-0.15px;">3.09</div>
<div class="a t " style="right:414.70000000000005px;top:641.1px;font-size:10.3px;line-height:13px;color:#1a1a1a;letter-spacing:-0.15px;">10.000</div>
<div class="a t " style="right:347.5px;top:641.1px;font-size:10.3px;line-height:13px;color:#1a1a1a;letter-spacing:-0.15px;">20.89</div>
<div class="a t " style="right:294.20000000000005px;top:641.1px;font-size:10.3px;line-height:13px;color:#1a1a1a;letter-spacing:-0.15px;">208.94</div>
<div class="a t " style="right:240px;top:641.1px;font-size:10.3px;line-height:13px;color:#1a1a1a;letter-spacing:-0.15px;">67.63</div>
<div class="a t " style="right:193.4000000000001px;top:641.1px;font-size:10.3px;line-height:13px;color:#1a1a1a;letter-spacing:-0.15px;">208.94</div>
<div class="a t " style="right:144px;top:641.1px;font-size:10.3px;line-height:13px;color:#1a1a1a;letter-spacing:-0.15px;">3.09</div>
<div class="a t " style="left:550px;top:659.2px;font-size:10.3px;line-height:13px;color:#1a1a1a;letter-spacing:-0.15px;">0050</div>
<div class="a t " style="left:648px;top:659.2px;font-size:10.3px;line-height:13px;color:#1a1a1a;letter-spacing:-0.15px;">Cravos</div>
<div class="a t " style="right:551.0999999999999px;top:659.2px;font-size:10.3px;line-height:13px;color:#1a1a1a;letter-spacing:-0.15px;">0.40</div>
<div class="a t " style="right:492px;top:659.2px;font-size:10.3px;line-height:13px;color:#1a1a1a;letter-spacing:-0.15px;">1.54</div>
<div class="a t " style="right:414.70000000000005px;top:659.2px;font-size:10.3px;line-height:13px;color:#1a1a1a;letter-spacing:-0.15px;">10.000</div>
<div class="a t " style="right:347.5px;top:659.2px;font-size:10.3px;line-height:13px;color:#1a1a1a;letter-spacing:-0.15px;">11.45</div>
<div class="a t " style="right:294.20000000000005px;top:659.2px;font-size:10.3px;line-height:13px;color:#1a1a1a;letter-spacing:-0.15px;">286.18</div>
<div class="a t " style="right:240px;top:659.2px;font-size:10.3px;line-height:13px;color:#1a1a1a;letter-spacing:-0.15px;">74.11</div>
<div class="a t " style="right:193.4000000000001px;top:659.2px;font-size:10.3px;line-height:13px;color:#1a1a1a;letter-spacing:-0.15px;">286.18</div>
<div class="a t " style="right:144px;top:659.2px;font-size:10.3px;line-height:13px;color:#1a1a1a;letter-spacing:-0.15px;">3.86</div>
<div class="a t " style="left:550px;top:677.4px;font-size:10.3px;line-height:13px;color:#1a1a1a;letter-spacing:-0.15px;">0051</div>
<div class="a t " style="left:648px;top:677.4px;font-size:10.3px;line-height:13px;color:#1a1a1a;letter-spacing:-0.15px;">Dálias</div>
<div class="a t " style="right:551.0999999999999px;top:677.4px;font-size:10.3px;line-height:13px;color:#1a1a1a;letter-spacing:-0.15px;">0.50</div>
<div class="a t " style="right:492px;top:677.4px;font-size:10.3px;line-height:13px;color:#1a1a1a;letter-spacing:-0.15px;">1.54</div>
<div class="a t " style="right:414.70000000000005px;top:677.4px;font-size:10.3px;line-height:13px;color:#1a1a1a;letter-spacing:-0.15px;">10.000</div>
<div class="a t " style="right:347.5px;top:677.4px;font-size:10.3px;line-height:13px;color:#1a1a1a;letter-spacing:-0.15px;">10.45</div>
<div class="a t " style="right:294.20000000000005px;top:677.4px;font-size:10.3px;line-height:13px;color:#1a1a1a;letter-spacing:-0.15px;">208.94</div>
<div class="a t " style="right:240px;top:677.4px;font-size:10.3px;line-height:13px;color:#1a1a1a;letter-spacing:-0.15px;">67.63</div>
<div class="a t " style="right:193.4000000000001px;top:677.4px;font-size:10.3px;line-height:13px;color:#1a1a1a;letter-spacing:-0.15px;">208.94</div>
<div class="a t " style="right:144px;top:677.4px;font-size:10.3px;line-height:13px;color:#1a1a1a;letter-spacing:-0.15px;">3.09</div>
<div class="a t " style="left:550px;top:695.5px;font-size:10.3px;line-height:13px;color:#1a1a1a;letter-spacing:-0.15px;">0110</div>
<div class="a t " style="left:648px;top:695.5px;font-size:10.3px;line-height:13px;color:#1a1a1a;letter-spacing:-0.15px;">Batidos</div>
<div class="a t " style="right:551.0999999999999px;top:695.5px;font-size:10.3px;line-height:13px;color:#1a1a1a;letter-spacing:-0.15px;">1.00</div>
<div class="a t " style="right:492px;top:695.5px;font-size:10.3px;line-height:13px;color:#1a1a1a;letter-spacing:-0.15px;">3.09</div>
<div class="a t " style="right:414.70000000000005px;top:695.5px;font-size:10.3px;line-height:13px;color:#1a1a1a;letter-spacing:-0.15px;">1.000</div>
<div class="a t " style="right:347.5px;top:695.5px;font-size:10.3px;line-height:13px;color:#1a1a1a;letter-spacing:-0.15px;">2.09</div>
<div class="a t " style="right:294.20000000000005px;top:695.5px;font-size:10.3px;line-height:13px;color:#1a1a1a;letter-spacing:-0.15px;">208.94</div>
<div class="a t " style="right:240px;top:695.5px;font-size:10.3px;line-height:13px;color:#1a1a1a;letter-spacing:-0.15px;">67.63</div>
<div class="a t " style="right:193.4000000000001px;top:695.5px;font-size:10.3px;line-height:13px;color:#1a1a1a;letter-spacing:-0.15px;">208.94</div>
<div class="a t " style="right:144px;top:695.5px;font-size:10.3px;line-height:13px;color:#1a1a1a;letter-spacing:-0.15px;">3.09</div>
<div class="a t " style="left:550px;top:713.7px;font-size:10.3px;line-height:13px;color:#1a1a1a;letter-spacing:-0.15px;">0114</div>
<div class="a t " style="left:648px;top:713.7px;font-size:10.3px;line-height:13px;color:#1a1a1a;letter-spacing:-0.15px;">Frize</div>
<div class="a t " style="right:551.0999999999999px;top:713.7px;font-size:10.3px;line-height:13px;color:#1a1a1a;letter-spacing:-0.15px;">0.50</div>
<div class="a t " style="right:492px;top:713.7px;font-size:10.3px;line-height:13px;color:#1a1a1a;letter-spacing:-0.15px;">1.16</div>
<div class="a t " style="right:414.70000000000005px;top:713.7px;font-size:10.3px;line-height:13px;color:#1a1a1a;letter-spacing:-0.15px;">1.000</div>
<div class="a t " style="right:347.5px;top:713.7px;font-size:10.3px;line-height:13px;color:#1a1a1a;letter-spacing:-0.15px;">0.66</div>
<div class="a t " style="right:294.20000000000005px;top:713.7px;font-size:10.3px;line-height:13px;color:#1a1a1a;letter-spacing:-0.15px;">131.71</div>
<div class="a t " style="right:240px;top:713.7px;font-size:10.3px;line-height:13px;color:#1a1a1a;letter-spacing:-0.15px;">56.84</div>
<div class="a t " style="right:193.4000000000001px;top:713.7px;font-size:10.3px;line-height:13px;color:#1a1a1a;letter-spacing:-0.15px;">131.71</div>
<div class="a t " style="right:144px;top:713.7px;font-size:10.3px;line-height:13px;color:#1a1a1a;letter-spacing:-0.15px;">2.32</div>
<div class="a t " style="left:550px;top:731.8px;font-size:10.3px;line-height:13px;color:#1a1a1a;letter-spacing:-0.15px;">0115</div>
<div class="a t " style="left:648px;top:731.8px;font-size:10.3px;line-height:13px;color:#1a1a1a;letter-spacing:-0.15px;">Água Castelo</div>
<div class="a t " style="right:551.0999999999999px;top:731.8px;font-size:10.3px;line-height:13px;color:#1a1a1a;letter-spacing:-0.15px;">0.40</div>
<div class="a t " style="right:492px;top:731.8px;font-size:10.3px;line-height:13px;color:#1a1a1a;letter-spacing:-0.15px;">1.16</div>
<div class="a t " style="right:414.70000000000005px;top:731.8px;font-size:10.3px;line-height:13px;color:#1a1a1a;letter-spacing:-0.15px;">1.000</div>
<div class="a t " style="right:347.5px;top:731.8px;font-size:10.3px;line-height:13px;color:#1a1a1a;letter-spacing:-0.15px;">0.76</div>
<div class="a t " style="right:294.20000000000005px;top:731.8px;font-size:10.3px;line-height:13px;color:#1a1a1a;letter-spacing:-0.15px;">189.63</div>
<div class="a t " style="right:240px;top:731.8px;font-size:10.3px;line-height:13px;color:#1a1a1a;letter-spacing:-0.15px;">65.47</div>
<div class="a t " style="right:193.4000000000001px;top:731.8px;font-size:10.3px;line-height:13px;color:#1a1a1a;letter-spacing:-0.15px;">189.63</div>
<div class="a t " style="right:144px;top:731.8px;font-size:10.3px;line-height:13px;color:#1a1a1a;letter-spacing:-0.15px;">2.90</div>
<div class="a t " style="left:550px;top:750.0px;font-size:10.3px;line-height:13px;color:#1a1a1a;letter-spacing:-0.15px;">1802255</div>
<div class="a t " style="left:648px;top:750.0px;font-size:10.3px;line-height:13px;color:#1a1a1a;letter-spacing:-0.15px;">Madeira</div>
<div class="a t " style="right:551.0999999999999px;top:750.0px;font-size:10.3px;line-height:13px;color:#1a1a1a;letter-spacing:-0.15px;">15.00</div>
<div class="a t " style="right:492px;top:750.0px;font-size:10.3px;line-height:13px;color:#1a1a1a;letter-spacing:-0.15px;">23.16</div>
<div class="a t " style="right:414.70000000000005px;top:750.0px;font-size:10.3px;line-height:13px;color:#1a1a1a;letter-spacing:-0.15px;">2.000</div>
<div class="a t " style="right:347.5px;top:750.0px;font-size:10.3px;line-height:13px;color:#1a1a1a;letter-spacing:-0.15px;">16.33</div>
<div class="a t " style="right:294.20000000000005px;top:750.0px;font-size:10.3px;line-height:13px;color:#1a1a1a;letter-spacing:-0.15px;">54.42</div>
<div class="a t " style="right:240px;top:750.0px;font-size:10.3px;line-height:13px;color:#1a1a1a;letter-spacing:-0.15px;">35.24</div>
<div class="a t " style="right:193.4000000000001px;top:750.0px;font-size:10.3px;line-height:13px;color:#1a1a1a;letter-spacing:-0.15px;">54.42</div>
<div class="a t " style="right:144px;top:750.0px;font-size:10.3px;line-height:13px;color:#1a1a1a;letter-spacing:-0.15px;">1.54</div>
<div class="a t " style="left:550px;top:768.1px;font-size:10.3px;line-height:13px;color:#1a1a1a;letter-spacing:-0.15px;">AAST1</div>
<div class="a t " style="left:648px;top:768.1px;font-size:10.3px;line-height:13px;color:#1a1a1a;letter-spacing:-0.15px;">Máscara Expert Cabelos Secos</div>
<div class="a t " style="right:551.0999999999999px;top:768.1px;font-size:10.3px;line-height:13px;color:#1a1a1a;letter-spacing:-0.15px;">10.00</div>
<div class="a t " style="right:492px;top:768.1px;font-size:10.3px;line-height:13px;color:#1a1a1a;letter-spacing:-0.15px;">19.31</div>
<div class="a t " style="right:414.70000000000005px;top:768.1px;font-size:10.3px;line-height:13px;color:#1a1a1a;letter-spacing:-0.15px;">6.000</div>
<div class="a t " style="right:347.5px;top:768.1px;font-size:10.3px;line-height:13px;color:#1a1a1a;letter-spacing:-0.15px;">55.85</div>
<div class="a t " style="right:294.20000000000005px;top:768.1px;font-size:10.3px;line-height:13px;color:#1a1a1a;letter-spacing:-0.15px;">93.09</div>
<div class="a t " style="right:240px;top:768.1px;font-size:10.3px;line-height:13px;color:#1a1a1a;letter-spacing:-0.15px;">48.21</div>
<div class="a t " style="right:193.4000000000001px;top:768.1px;font-size:10.3px;line-height:13px;color:#1a1a1a;letter-spacing:-0.15px;">93.09</div>
<div class="a t " style="right:144px;top:768.1px;font-size:10.3px;line-height:13px;color:#1a1a1a;letter-spacing:-0.15px;">1.93</div>
<div class="a" style="left:550px;top:781px;width:884px;height:2px;background:#000"></div>
<div class="a" style="left:550px;top:783px;width:884px;height:21px;background:#b0c4de"></div>
<div class="a t " style="left:550px;top:787.0px;font-size:10.3px;line-height:13px;color:#111;font-weight:bold;letter-spacing:-0.2px;">20</div>
<div class="a t " style="right:414.70000000000005px;top:787.0px;font-size:10.3px;line-height:13px;color:#111;font-weight:bold;letter-spacing:-0.2px;">183.000</div>
<div class="a t " style="right:347.5px;top:787.0px;font-size:10.3px;line-height:13px;color:#111;font-weight:bold;letter-spacing:-0.2px;">1,360.70</div>
<div class="a t " style="right:294.20000000000005px;top:787.0px;font-size:10.3px;line-height:13px;color:#111;font-weight:bold;letter-spacing:-0.2px;">138.68</div>
<div class="a t " style="right:240px;top:787.0px;font-size:10.3px;line-height:13px;color:#111;font-weight:bold;letter-spacing:-0.2px;">58.10</div>
<div class="a t " style="right:193.4000000000001px;top:787.0px;font-size:10.3px;line-height:13px;color:#111;font-weight:bold;letter-spacing:-0.2px;">138.68</div>
<div class="a t " style="right:144px;top:787.0px;font-size:10.3px;line-height:13px;color:#111;font-weight:bold;letter-spacing:-0.2px;">2.39</div>
</body></html>
